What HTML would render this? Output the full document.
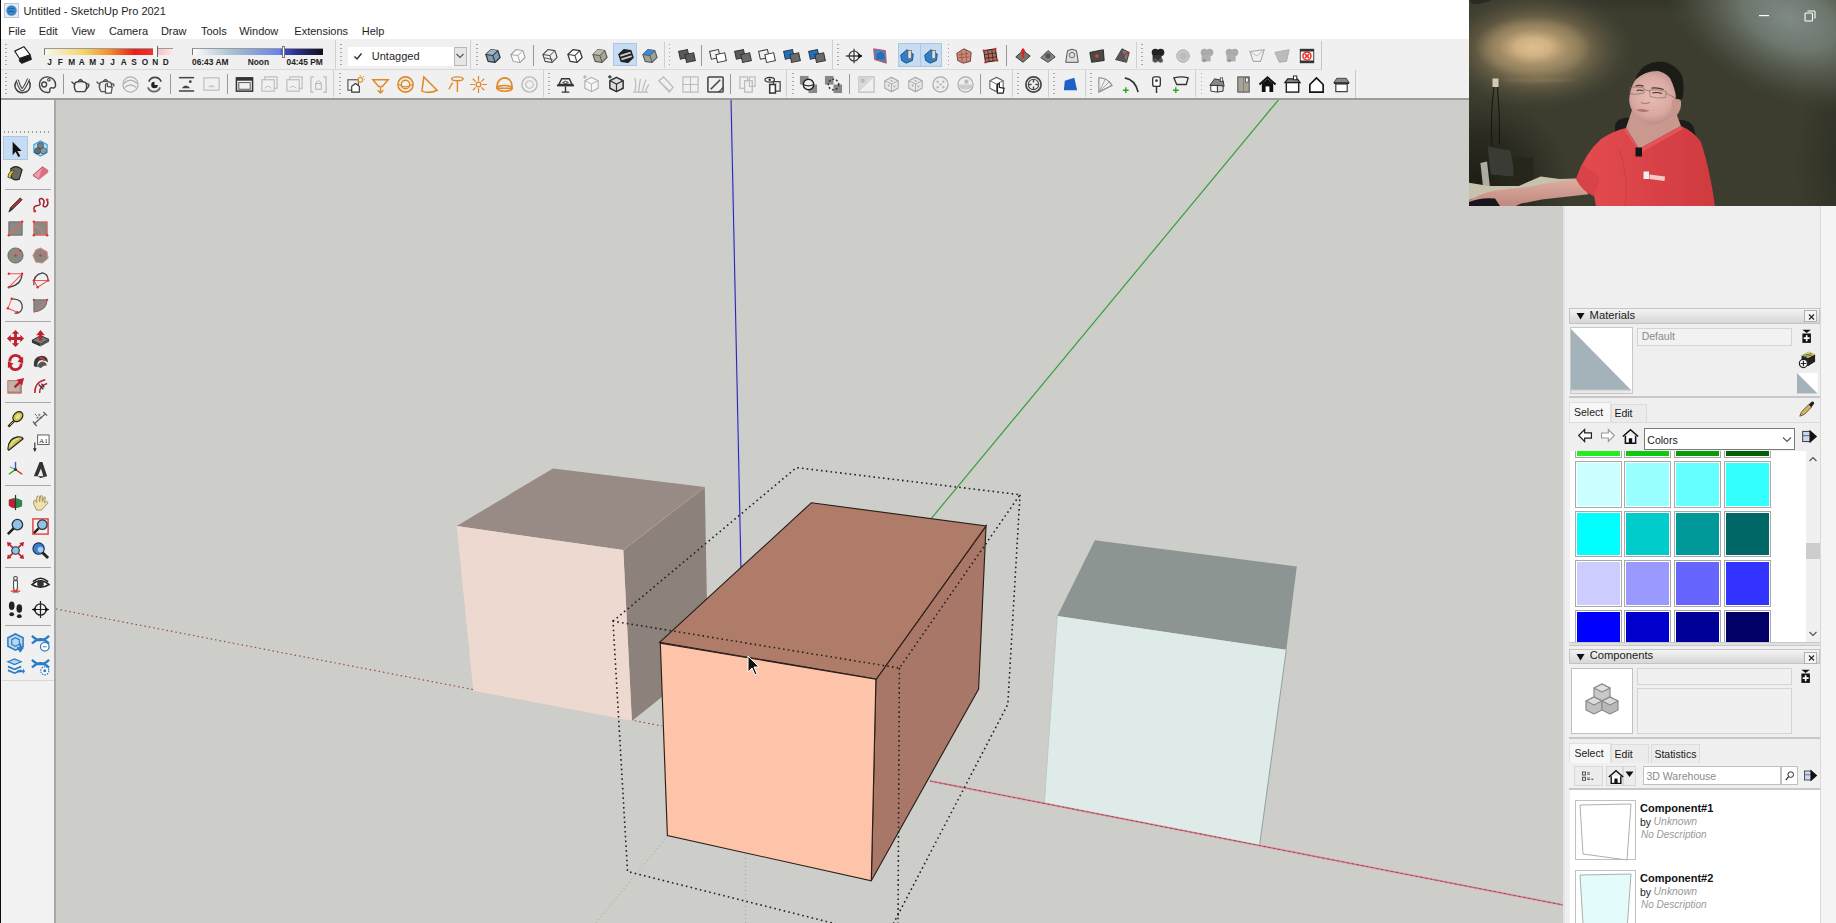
<!DOCTYPE html>
<html><head><meta charset="utf-8">
<style>
*{margin:0;padding:0;box-sizing:border-box}
html,body{width:1836px;height:923px;overflow:hidden;background:#f0f0f0;font-family:"Liberation Sans",sans-serif;color:#000;position:relative}
.a{position:absolute}
.t{position:absolute;white-space:nowrap;line-height:1}
svg{overflow:visible}
</style></head><body>
<div class="a" style="left:0px;top:0px;width:1836px;height:39px;background:#fff;"></div>
<svg class="a" style="left:4px;top:3px" width="15" height="15" viewBox="0 0 15 15"><rect x="0.5" y="0.5" width="14" height="14" fill="#e8eef5" stroke="#b8c8d8"/><circle cx="7.5" cy="7.5" r="5.2" fill="#3a86c8"/><path d="M4,6 Q7,4 10,6 M4,9 Q7,7 10,9" stroke="#1d5f9a" stroke-width="1" fill="none"/></svg>
<div class="t" style="left:23.4px;top:5.89px;font-size:11px;color:#1e1e1e;font-weight:normal;">Untitled - SketchUp Pro 2021</div>
<div class="t" style="left:8.2px;top:26.09px;font-size:11px;color:#1e1e1e;font-weight:normal;">File</div>
<div class="t" style="left:38.7px;top:26.09px;font-size:11px;color:#1e1e1e;font-weight:normal;">Edit</div>
<div class="t" style="left:71.4px;top:26.09px;font-size:11px;color:#1e1e1e;font-weight:normal;">View</div>
<div class="t" style="left:108.9px;top:26.09px;font-size:11px;color:#1e1e1e;font-weight:normal;">Camera</div>
<div class="t" style="left:160.9px;top:26.09px;font-size:11px;color:#1e1e1e;font-weight:normal;">Draw</div>
<div class="t" style="left:201px;top:26.09px;font-size:11px;color:#1e1e1e;font-weight:normal;">Tools</div>
<div class="t" style="left:239.2px;top:26.09px;font-size:11px;color:#1e1e1e;font-weight:normal;">Window</div>
<div class="t" style="left:294.3px;top:26.09px;font-size:11px;color:#1e1e1e;font-weight:normal;">Extensions</div>
<div class="t" style="left:361.7px;top:26.09px;font-size:11px;color:#1e1e1e;font-weight:normal;">Help</div>
<div class="a" style="left:0px;top:39px;width:1836px;height:59px;background:#f0f0f0;"></div>
<div class="a" style="left:0px;top:69px;width:1321.5px;height:1px;background:#dadada;"></div>
<div class="a" style="left:1321px;top:40.5px;width:1.2px;height:29px;background:#c8c8c8;"></div>
<div class="a" style="left:1354.8px;top:70px;width:1.4px;height:28px;background:#c8c8c8;"></div>
<div class="a" style="left:0px;top:98px;width:1836px;height:1.8px;background:#9c9c9c;"></div>
<div class="a" style="left:334.5px;top:40px;width:1px;height:29px;background:#d0d0d0;"></div>
<div class="a" style="left:470px;top:40px;width:1px;height:29px;background:#d0d0d0;"></div>
<div class="a" style="left:832px;top:40px;width:1px;height:29px;background:#d0d0d0;"></div>
<div class="a" style="left:786.3px;top:70px;width:1px;height:27px;background:#d0d0d0;"></div>
<div class="a" style="left:5px;top:44px;width:1.5px;height:24px;background:repeating-linear-gradient(to bottom,#a4a4a4 0 1.5px,transparent 1.5px 4px)"></div>
<svg class="a" style="left:14.3px;top:46.0px" width="19.0" height="19.0" viewBox="0 0 20 20"><polygon points="10.4,0.7 0.8,5.4 5.8,13.2 17.1,9.3" fill="#fff" stroke="#222" stroke-width="1.2" stroke-linejoin="round"/><polygon points="5.8,13.2 17.1,9.3 18.5,14.2 8.2,18.4 5.5,16" fill="#1a1a1a" stroke="#222" stroke-width=".8"/></svg>
<div class="a" style="left:43.5px;top:48px;width:129.5px;height:7px;background:linear-gradient(to right,#fbf7ea 0%,#f5d46a 30%,#f09030 50%,#e8201a 70%,#f03030 84%,#f7d0d0 84.5%,#f5c0c0 88%,#fbeaea 100%);border-left:1px solid #777;border-top:1px solid #999"></div>
<div class="a" style="left:153px;top:46px;width:4.5px;height:11px;background:#f6f6f6;border-right:1px solid #666"></div>
<div class="t" style="left:47.2px;top:57.97px;font-size:8.3px;color:#222;font-weight:bold;">J</div>
<div class="t" style="left:57.7px;top:57.97px;font-size:8.3px;color:#222;font-weight:bold;">F</div>
<div class="t" style="left:68.2px;top:57.97px;font-size:8.3px;color:#222;font-weight:bold;">M</div>
<div class="t" style="left:78.7px;top:57.97px;font-size:8.3px;color:#222;font-weight:bold;">A</div>
<div class="t" style="left:89.2px;top:57.97px;font-size:8.3px;color:#222;font-weight:bold;">M</div>
<div class="t" style="left:99.7px;top:57.97px;font-size:8.3px;color:#222;font-weight:bold;">J</div>
<div class="t" style="left:110.2px;top:57.97px;font-size:8.3px;color:#222;font-weight:bold;">J</div>
<div class="t" style="left:120.7px;top:57.97px;font-size:8.3px;color:#222;font-weight:bold;">A</div>
<div class="t" style="left:131.2px;top:57.97px;font-size:8.3px;color:#222;font-weight:bold;">S</div>
<div class="t" style="left:141.7px;top:57.97px;font-size:8.3px;color:#222;font-weight:bold;">O</div>
<div class="t" style="left:152.2px;top:57.97px;font-size:8.3px;color:#222;font-weight:bold;">N</div>
<div class="t" style="left:162.7px;top:57.97px;font-size:8.3px;color:#222;font-weight:bold;">D</div>
<div class="a" style="left:192px;top:48px;width:131px;height:7px;background:linear-gradient(to right,#fbfbfb 0%,#a8c0d0 30%,#6a80e8 67%,#5060d8 68%,#4050c0 70%,#2a2f88 80%,#10101a 100%);border-left:1px solid #777;border-top:1px solid #999"></div>
<div class="a" style="left:281.5px;top:46px;width:3px;height:12px;background:#fff;border:1px solid #777"></div>
<div class="t" style="left:192px;top:58.19px;font-size:8.4px;color:#222;font-weight:bold;">06:43 AM</div>
<div class="t" style="left:247.7px;top:58.19px;font-size:8.4px;color:#222;font-weight:bold;">Noon</div>
<div class="t" style="left:286.5px;top:58.19px;font-size:8.4px;color:#222;font-weight:bold;">04:45 PM</div>
<div class="a" style="left:340px;top:44px;width:1.5px;height:24px;background:repeating-linear-gradient(to bottom,#a4a4a4 0 1.5px,transparent 1.5px 4px)"></div>
<div class="a" style="left:348px;top:46.5px;width:118.5px;height:19.5px;background:#fff;"></div>
<div class="a" style="left:453.5px;top:46.5px;width:13px;height:19.5px;background:#e6e6e6;border:1px solid #b8b8b8"></div>
<svg class="a" style="left:455px;top:52px" width="10" height="8" viewBox="0 0 10 8"><path d="M1.5,2 L5,5.5 L8.5,2" fill="none" stroke="#555" stroke-width="1.1"/></svg>
<svg class="a" style="left:353px;top:52px" width="10" height="9" viewBox="0 0 10 9"><path d="M1.5,4.5 L4,7 L8.5,1.5" fill="none" stroke="#333" stroke-width="1.5"/></svg>
<div class="t" style="left:371.8px;top:50.69px;font-size:11px;color:#1e1e1e;font-weight:normal;">Untagged</div>
<div class="a" style="left:476px;top:44px;width:1.5px;height:24px;background:repeating-linear-gradient(to bottom,#a4a4a4 0 1.5px,transparent 1.5px 4px)"></div>
<svg class="a" style="left:484.0px;top:46.5px" width="18.0" height="18.0" viewBox="0 0 20 20"><g transform="rotate(-18 10 10)"><polygon points="3,6 10,2.5 17,6 17,14 10,17.5 3,14" fill="#7f9db3" stroke="#333" stroke-width="1.4" stroke-linejoin="round"/><polygon points="3,6 10,2.5 17,6 10,9.5" fill="#9bb6c8"/><polyline points="3,6 10,9.5 17,6 M10,9.5" fill="none" stroke="#333" stroke-width="1.1199999999999999"/><line x1="10" y1="9.5" x2="10" y2="17.5" stroke="#333" stroke-width="1.1199999999999999"/></g></svg>
<svg class="a" style="left:509.0px;top:46.5px" width="18.0" height="18.0" viewBox="0 0 20 20"><g transform="rotate(-18 10 10)"><polygon points="3,6 10,2.5 17,6 17,14 10,17.5 3,14" fill="#fafafa" stroke="#9a9a9a" stroke-width="1.1" stroke-linejoin="round"/><polyline points="3,6 10,9.5 17,6 M10,9.5" fill="none" stroke="#9a9a9a" stroke-width="0.8800000000000001"/><line x1="10" y1="9.5" x2="10" y2="17.5" stroke="#9a9a9a" stroke-width="0.8800000000000001"/></g></svg>
<svg class="a" style="left:541.0px;top:46.5px" width="18.0" height="18.0" viewBox="0 0 20 20"><g transform="rotate(-18 10 10)"><polygon points="3,6 10,2.5 17,6 17,14 10,17.5 3,14" fill="none" stroke="#444" stroke-width="1.2" stroke-linejoin="round"/><polyline points="3,6 10,9.5 17,6 M10,9.5" fill="none" stroke="#444" stroke-width="0.96"/><line x1="10" y1="9.5" x2="10" y2="17.5" stroke="#444" stroke-width="0.96"/></g><line x1="4" y1="12" x2="13" y2="14" stroke="#444" stroke-width="1"/></svg>
<svg class="a" style="left:566.2px;top:46.5px" width="18.0" height="18.0" viewBox="0 0 20 20"><g transform="rotate(-18 10 10)"><polygon points="3,6 10,2.5 17,6 17,14 10,17.5 3,14" fill="#fff" stroke="#333" stroke-width="1.4" stroke-linejoin="round"/><polyline points="3,6 10,9.5 17,6 M10,9.5" fill="none" stroke="#333" stroke-width="1.1199999999999999"/><line x1="10" y1="9.5" x2="10" y2="17.5" stroke="#333" stroke-width="1.1199999999999999"/></g></svg>
<svg class="a" style="left:591.0px;top:46.5px" width="18.0" height="18.0" viewBox="0 0 20 20"><g transform="rotate(-18 10 10)"><polygon points="3,6 10,2.5 17,6 17,14 10,17.5 3,14" fill="#a9a794" stroke="#555" stroke-width="1.2" stroke-linejoin="round"/><polygon points="3,6 10,2.5 17,6 10,9.5" fill="#bdbba6"/><polyline points="3,6 10,9.5 17,6 M10,9.5" fill="none" stroke="#555" stroke-width="0.96"/><line x1="10" y1="9.5" x2="10" y2="17.5" stroke="#555" stroke-width="0.96"/></g></svg>
<div class="a" style="left:532.8px;top:45px;width:1px;height:21px;background:#999;"></div>
<div class="a" style="left:612.9px;top:43.1px;width:24.5px;height:23.3px;background:#c5dcf2;border:1px solid #a9c8e8"></div>
<svg class="a" style="left:616.5px;top:46.5px" width="18.0" height="18.0" viewBox="0 0 20 20"><g transform="rotate(-18 10 10)"><polygon points="3,6 10,2.5 17,6 17,14 10,17.5 3,14" fill="#222" stroke="#222" stroke-width="1.4" stroke-linejoin="round"/><polyline points="3,6 10,9.5 17,6 M10,9.5" fill="none" stroke="#222" stroke-width="1.1199999999999999"/><line x1="10" y1="9.5" x2="10" y2="17.5" stroke="#222" stroke-width="1.1199999999999999"/></g><g transform="rotate(-18 10 10)"><rect x="4" y="7" width="12" height="2" fill="#ccc"/><rect x="4" y="11" width="12" height="2" fill="#ccc"/></g></svg>
<svg class="a" style="left:641.0px;top:46.5px" width="18.0" height="18.0" viewBox="0 0 20 20"><g transform="rotate(-18 10 10)"><polygon points="3,6 10,2.5 17,6 17,14 10,17.5 3,14" fill="#9fa19b" stroke="#555" stroke-width="1.2" stroke-linejoin="round"/><polygon points="3,6 10,2.5 17,6 10,9.5" fill="#2f8ede"/><polyline points="3,6 10,9.5 17,6 M10,9.5" fill="none" stroke="#555" stroke-width="0.96"/><line x1="10" y1="9.5" x2="10" y2="17.5" stroke="#555" stroke-width="0.96"/></g></svg>
<div class="a" style="left:663.5px;top:42px;width:1px;height:26px;background:#d0d0d0;"></div>
<div class="a" style="left:668.5px;top:44px;width:1.5px;height:24px;background:repeating-linear-gradient(to bottom,#a4a4a4 0 1.5px,transparent 1.5px 4px)"></div>
<svg class="a" style="left:677.5px;top:46.5px" width="18.0" height="18.0" viewBox="0 0 20 20"><g transform="rotate(-12 10 10)"><rect x="2" y="3" width="10" height="9" fill="#5a5a5a" stroke="#333" stroke-width="1.1"/><rect x="8" y="8" width="10" height="9" fill="#5a5a5a" stroke="#333" stroke-width="1.1"/></g></svg>
<div class="a" style="left:701px;top:45px;width:1px;height:21px;background:#999;"></div>
<svg class="a" style="left:709.0px;top:46.5px" width="18.0" height="18.0" viewBox="0 0 20 20"><g transform="rotate(-12 10 10)"><rect x="2" y="3" width="10" height="9" fill="none" stroke="#333" stroke-width="1.1"/><rect x="8" y="8" width="10" height="9" fill="#fff" stroke="#333" stroke-width="1.1"/></g></svg>
<svg class="a" style="left:734.0px;top:46.5px" width="18.0" height="18.0" viewBox="0 0 20 20"><g transform="rotate(-12 10 10)"><rect x="2" y="3" width="10" height="9" fill="#5a5a5a" stroke="#333" stroke-width="1.1"/><rect x="8" y="8" width="10" height="9" fill="#6a6a6a" stroke="#333" stroke-width="1.1"/></g></svg>
<svg class="a" style="left:758.0px;top:46.5px" width="18.0" height="18.0" viewBox="0 0 20 20"><g transform="rotate(-12 10 10)"><rect x="2" y="3" width="10" height="9" fill="none" stroke="#333" stroke-width="1.1"/><rect x="8" y="8" width="10" height="9" fill="#fff" stroke="#333" stroke-width="1.1"/></g></svg>
<svg class="a" style="left:783.0px;top:46.5px" width="18.0" height="18.0" viewBox="0 0 20 20"><g transform="rotate(-12 10 10)"><rect x="2" y="3" width="10" height="9" fill="#1f6fc0" stroke="#333" stroke-width="1.1"/><rect x="8" y="8" width="10" height="9" fill="#6a6a6a" stroke="#333" stroke-width="1.1"/></g></svg>
<svg class="a" style="left:808.0px;top:46.5px" width="18.0" height="18.0" viewBox="0 0 20 20"><g transform="rotate(-12 10 10)"><rect x="2" y="3" width="10" height="9" fill="#1f6fc0" stroke="#333" stroke-width="1.1"/><rect x="8" y="8" width="10" height="9" fill="#6a6a6a" stroke="#333" stroke-width="1.1"/></g></svg>
<div class="a" style="left:837px;top:44px;width:1.5px;height:24px;background:repeating-linear-gradient(to bottom,#a4a4a4 0 1.5px,transparent 1.5px 4px)"></div>
<svg class="a" style="left:845.0px;top:46.5px" width="18.0" height="18.0" viewBox="0 0 20 20"><circle cx="10" cy="10" r="5.5" fill="none" stroke="#333" stroke-width="1.2"/><line x1="1" y1="10" x2="19" y2="10" stroke="#222" stroke-width="1.4"/><line x1="10" y1="2" x2="10" y2="18" stroke="#222" stroke-width="1.2"/><polygon points="19,10 15,7 15,13" fill="#111"/></svg>
<svg class="a" style="left:871.0px;top:46.5px" width="18.0" height="18.0" viewBox="0 0 20 20"><polygon points="3,2 16,4 17,18 4,14" fill="#3f88cc" stroke="#d44" stroke-width="1"/><polygon points="6,8 11,5 15,8 15,14 6,14" fill="#2a6fb0"/></svg>
<div class="a" style="left:898px;top:43px;width:44px;height:23.5px;background:#c5dcf2;border:1px solid #a9c8e8"></div>
<div class="a" style="left:920px;top:43px;width:1px;height:23.5px;background:#a9c8e8;"></div>
<svg class="a" style="left:897.5px;top:46.5px" width="18.0" height="18.0" viewBox="0 0 20 20"><polygon points="3,9 10,3 17,8 16,15 9,18 4,15" fill="#2f7fc8" stroke="#1a4f80" stroke-width="1"/><rect x="11" y="4" width="4" height="9" fill="#ddd" stroke="#555" stroke-width=".7"/></svg>
<svg class="a" style="left:922.0px;top:46.5px" width="18.0" height="18.0" viewBox="0 0 20 20"><polygon points="3,9 10,3 17,8 16,15 9,18 4,15" fill="#2f7fc8" stroke="#1a4f80" stroke-width="1"/><rect x="11" y="4" width="4" height="9" fill="#ddd" stroke="#555" stroke-width=".7"/></svg>
<div class="a" style="left:947.5px;top:44px;width:1.5px;height:24px;background:repeating-linear-gradient(to bottom,#a4a4a4 0 1.5px,transparent 1.5px 4px)"></div>
<svg class="a" style="left:954.6px;top:46.5px" width="18.0" height="18.0" viewBox="0 0 20 20"><polygon points="2,7 10,2 18,6 17,16 9,18 3,15" fill="#c98a78" stroke="#6a3a30" stroke-width="1"/><path d="M4,9 L15,7 M4,12 L16,11 M7,5 L8,17 M12,4 L13,17" stroke="#8a4a40" stroke-width=".7"/></svg>
<svg class="a" style="left:981.0px;top:46.5px" width="18.0" height="18.0" viewBox="0 0 20 20"><polygon points="3,4 16,2 18,15 5,17" fill="#b86a5a" stroke="#222" stroke-width="1.1"/><path d="M4,8.5 L17,6.5 M4.5,12.5 L17.5,11 M7.5,3.5 L9,16.5 M12,3 L13.5,16" stroke="#222" stroke-width=".8"/><circle cx="3" cy="4" r="1.3" fill="#e22"/><circle cx="16" cy="2" r="1.3" fill="#e22"/><circle cx="18" cy="15" r="1.3" fill="#e22"/><circle cx="5" cy="17" r="1.3" fill="#e22"/></svg>
<div class="a" style="left:1005.6px;top:45px;width:1px;height:21px;background:#999;"></div>
<svg class="a" style="left:1013.6px;top:46.5px" width="18.0" height="18.0" viewBox="0 0 20 20"><polygon points="2,11 10,4 18,10 10,17" fill="#7a746a" stroke="#333" stroke-width="1"/><path d="M10,2 L10,12" stroke="#d22" stroke-width="2.4"/><polygon points="10,1 7,5 13,5" fill="#d22"/></svg>
<svg class="a" style="left:1038.5px;top:46.5px" width="18.0" height="18.0" viewBox="0 0 20 20"><polygon points="2,12 10,4 18,11 10,17" fill="#888" stroke="#333" stroke-width="1"/><circle cx="10" cy="10" r="3" fill="#555"/></svg>
<svg class="a" style="left:1062.7px;top:46.5px" width="18.0" height="18.0" viewBox="0 0 20 20"><path d="M5,4 Q10,1 15,4 L17,17 L3,17 Z" fill="#ddd" stroke="#555" stroke-width="1.1"/><circle cx="10" cy="9" r="3" fill="none" stroke="#666"/></svg>
<svg class="a" style="left:1088.0px;top:46.5px" width="18.0" height="18.0" viewBox="0 0 20 20"><polygon points="2,6 17,3 18,15 4,17" fill="#4a4a44" stroke="#222" stroke-width="1"/><circle cx="10" cy="10" r="2" fill="#d44"/></svg>
<svg class="a" style="left:1113.0px;top:46.5px" width="18.0" height="18.0" viewBox="0 0 20 20"><polygon points="10,2 18,6 15,17 3,14" fill="#777" stroke="#333" stroke-width="1"/><path d="M3,14 L18,6" stroke="#d22" stroke-width="1.4"/><polygon points="10,2 3,14 15,17" fill="#555"/></svg>
<div class="a" style="left:1136px;top:42px;width:1px;height:26px;background:#d0d0d0;"></div>
<div class="a" style="left:1141px;top:44px;width:1.5px;height:24px;background:repeating-linear-gradient(to bottom,#a4a4a4 0 1.5px,transparent 1.5px 4px)"></div>
<svg class="a" style="left:1148.7px;top:46.5px" width="18.0" height="18.0" viewBox="0 0 20 20"><circle cx="7" cy="6" r="4" fill="#222"/><circle cx="13" cy="6" r="4" fill="#222"/><rect x="4" y="9" width="10" height="7" fill="#333"/><circle cx="7" cy="15" r="2.5" fill="#555"/><circle cx="13" cy="15" r="2.5" fill="#555"/></svg>
<svg class="a" style="left:1173.5px;top:46.5px" width="18.0" height="18.0" viewBox="0 0 20 20"><circle cx="10" cy="10" r="7" fill="#c8c8c8" stroke="#aaa"/><circle cx="10" cy="10" r="4" fill="#bbb"/></svg>
<svg class="a" style="left:1198.4px;top:46.5px" width="18.0" height="18.0" viewBox="0 0 20 20"><circle cx="7" cy="6" r="4" fill="#aaa"/><circle cx="13" cy="6" r="4" fill="#aaa"/><rect x="4" y="9" width="10" height="7" fill="#b0b0b0"/><circle cx="7" cy="15" r="2" fill="#999"/></svg>
<svg class="a" style="left:1223.2px;top:46.5px" width="18.0" height="18.0" viewBox="0 0 20 20"><circle cx="7" cy="6" r="4" fill="#aaa"/><circle cx="13" cy="6" r="4" fill="#aaa"/><rect x="4" y="9" width="10" height="7" fill="#b0b0b0"/><circle cx="7" cy="15" r="2" fill="#999"/></svg>
<svg class="a" style="left:1248.0px;top:46.5px" width="18.0" height="18.0" viewBox="0 0 20 20"><polygon points="2,5 18,3 14,16 6,16" fill="none" stroke="#aaa" stroke-width="1.2"/><path d="M2,5 L10,10 L18,3" stroke="#bbb" fill="none"/></svg>
<svg class="a" style="left:1273.0px;top:46.5px" width="18.0" height="18.0" viewBox="0 0 20 20"><polygon points="2,6 18,3 15,16 7,17" fill="#bbb" stroke="#aaa" stroke-width="1"/></svg>
<svg class="a" style="left:1297.7px;top:46.5px" width="18.0" height="18.0" viewBox="0 0 20 20"><rect x="2" y="2" width="16" height="16" fill="#333"/><rect x="3" y="5" width="14" height="10" fill="#f2f2f2"/><circle cx="10" cy="10" r="4.5" fill="none" stroke="#e22" stroke-width="1.5"/><path d="M7.5,7.5 L12.5,12.5 M12.5,7.5 L7.5,12.5" stroke="#e22" stroke-width="1.5"/></svg>
<div class="a" style="left:5px;top:73px;width:1.5px;height:22px;background:repeating-linear-gradient(to bottom,#a4a4a4 0 1.5px,transparent 1.5px 4px)"></div>
<svg class="a" style="left:13.2px;top:74.5px" width="19.0" height="19.0" viewBox="0 0 20 20"><path d="M5,5 Q1,9 2.5,13.5 Q5,19 11,18.5 Q17,18 18,12 Q18.5,8 16,5" fill="none" stroke="#444" stroke-width="1.6"/><path d="M4.5,5.5 Q8,17 10.5,15 Q13,12 16.5,4" fill="none" stroke="#444" stroke-width="3.4"/><path d="M4.5,5.5 Q8,17 10.5,15 Q13,12 16.5,4" fill="none" stroke="#f0f0f0" stroke-width="1.2"/></svg>
<svg class="a" style="left:38.2px;top:74.5px" width="19.0" height="19.0" viewBox="0 0 20 20"><path d="M10,2 C15,2 18.5,6 18.5,10.5 C18.5,13 17,14 15,13.5 C13,13 12,14.5 12.5,16.5 C12.5,18 11,18.5 9.5,18.5 C5,18.5 1.5,15 1.5,10 C1.5,5.5 5,2 10,2 Z" fill="none" stroke="#444" stroke-width="1.5"/><circle cx="6.5" cy="10" r="2.6" fill="none" stroke="#444" stroke-width="1.4"/><circle cx="11.5" cy="5" r="1.4" fill="none" stroke="#444" stroke-width="1.1"/></svg>
<div class="a" style="left:62.5px;top:74px;width:1px;height:20px;background:#999;"></div>
<svg class="a" style="left:71.0px;top:74.5px" width="19.0" height="19.0" viewBox="0 0 20 20"><path d="M4.5,8 Q10,5.5 15.5,8 Q18,13 14.5,17.5 L5.5,17.5 Q2,13 4.5,8 Z" fill="none" stroke="#444" stroke-width="1.5"/><path d="M4.5,10 Q2,9 0.5,7 M16,9 Q20,9 18.5,12 Q17.5,14 16,15" fill="none" stroke="#444" stroke-width="1.4"/><path d="M7.5,6 Q10,3 12.5,6" fill="#444" stroke="#444" stroke-width="1"/></svg>
<svg class="a" style="left:95.5px;top:74.5px" width="19.0" height="19.0" viewBox="0 0 20 20"><path d="M4.5,8 Q10,5.5 15.5,8 Q18,13 14.5,17.5 L5.5,17.5 Q2,13 4.5,8 Z" fill="none" stroke="#555" stroke-width="1.4"/><path d="M4.5,10 Q2,9 0.5,7 M16,9 Q20,9 18.5,12" fill="none" stroke="#555" stroke-width="1.4"/><path d="M7.5,6 Q10,3 12.5,6" fill="#555" stroke="#555"/><path d="M10,10 L10,19 L16,19 L17,13 L12,12 L12,9 Z" fill="#fff" stroke="#555" stroke-width="1.3"/></svg>
<svg class="a" style="left:120.5px;top:74.5px" width="19.0" height="19.0" viewBox="0 0 20 20"><circle cx="10" cy="10" r="8" fill="none" stroke="#b0b0b0" stroke-width="1.3"/><path d="M3,9 Q10,2 17,9 M4,13 Q10,8 16,13" fill="none" stroke="#aaa" stroke-width="1.3"/></svg>
<svg class="a" style="left:145.1px;top:74.5px" width="19.0" height="19.0" viewBox="0 0 20 20"><path d="M4,7 A7,7 0 0 1 17,7" fill="none" stroke="#444" stroke-width="1.8"/><path d="M16,13 A7,7 0 0 1 3,13" fill="none" stroke="#666" stroke-width="1.8"/><path d="M10,7 A3.5,3.5 0 1 0 13.5,10.5 L10,10.5 Z" fill="#222"/></svg>
<div class="a" style="left:170px;top:74px;width:1px;height:20px;background:#999;"></div>
<svg class="a" style="left:177.2px;top:74.5px" width="19.0" height="19.0" viewBox="0 0 20 20"><rect x="2" y="2" width="16" height="1.6" fill="#444"/><rect x="2" y="16" width="16" height="1.6" fill="#444"/><path d="M5,14 Q9,8 14,14 Z" fill="#444"/><circle cx="14" cy="7" r="1.5" fill="#444"/></svg>
<svg class="a" style="left:202.3px;top:74.5px" width="19.0" height="19.0" viewBox="0 0 20 20"><rect x="2" y="3" width="16" height="13" fill="none" stroke="#bbb" stroke-width="1.2"/><path d="M6,13 Q10,8 14,13" fill="#ccc"/></svg>
<div class="a" style="left:226.8px;top:74px;width:1px;height:20px;background:#999;"></div>
<svg class="a" style="left:234.9px;top:74.5px" width="19.0" height="19.0" viewBox="0 0 20 20"><rect x="1.5" y="3" width="17" height="14" fill="none" stroke="#333" stroke-width="1.6"/><rect x="1.5" y="3" width="17" height="3" fill="#333"/><rect x="4" y="8" width="12" height="7" fill="none" stroke="#555" stroke-width="1"/></svg>
<svg class="a" style="left:259.9px;top:74.5px" width="19.0" height="19.0" viewBox="0 0 20 20"><rect x="5" y="2" width="13" height="12" fill="none" stroke="#bbb" stroke-width="1.2"/><rect x="2" y="5" width="13" height="12" fill="#f0f0f0" stroke="#bbb" stroke-width="1.2"/><path d="M5,14 Q8,10 12,14" fill="none" stroke="#bbb"/></svg>
<svg class="a" style="left:285.0px;top:74.5px" width="19.0" height="19.0" viewBox="0 0 20 20"><rect x="5" y="2" width="13" height="12" fill="none" stroke="#bbb" stroke-width="1.2"/><rect x="2" y="5" width="13" height="12" fill="#f0f0f0" stroke="#bbb" stroke-width="1.2"/><path d="M5,14 Q8,10 12,14" fill="none" stroke="#bbb"/></svg>
<svg class="a" style="left:309.3px;top:74.5px" width="19.0" height="19.0" viewBox="0 0 20 20"><path d="M2,2 L2,18 L5,18 M15,18 L18,18 L18,2 L15,2 M5,2 L2,2" fill="none" stroke="#bbb" stroke-width="1.3"/><rect x="7" y="9" width="6" height="6" fill="none" stroke="#bbb" stroke-width="1.2"/><path d="M8,9 L8,7 Q10,5 12,7 L12,9" fill="none" stroke="#bbb"/></svg>
<div class="a" style="left:333.3px;top:70px;width:1px;height:27px;background:#d0d0d0;"></div>
<div class="a" style="left:339px;top:73px;width:1.5px;height:22px;background:repeating-linear-gradient(to bottom,#a4a4a4 0 1.5px,transparent 1.5px 4px)"></div>
<svg class="a" style="left:345.9px;top:74.5px" width="19.0" height="19.0" viewBox="0 0 20 20"><rect x="2" y="5" width="11" height="11" fill="none" stroke="#555" stroke-width="1.2"/><path d="M6,18 L6,12 L10,9 L14,12 L14,18 Z" fill="#fff" stroke="#333" stroke-width="1.2"/><circle cx="15" cy="5" r="2.5" fill="none" stroke="#e8912e" stroke-width="1.3"/><path d="M15,0 L15,1.5 M19,5 L20,5 M18,2 L19,1" stroke="#e8912e"/></svg>
<svg class="a" style="left:371.0px;top:74.5px" width="19.0" height="19.0" viewBox="0 0 20 20"><path d="M2,5 L18,5 L12,12 L8,12 Z" fill="none" stroke="#e0892a" stroke-width="1.6"/><path d="M10,12 L10,18 M7,16 L10,19 L13,16" fill="none" stroke="#e0892a" stroke-width="1.4"/></svg>
<svg class="a" style="left:396.0px;top:74.5px" width="19.0" height="19.0" viewBox="0 0 20 20"><circle cx="10" cy="10" r="8" fill="none" stroke="#e0892a" stroke-width="1.7"/><circle cx="10" cy="10" r="4.5" fill="none" stroke="#e0892a" stroke-width="1.5"/><path d="M3,10 Q10,15 17,10" fill="none" stroke="#e0892a" stroke-width="1.2"/></svg>
<svg class="a" style="left:420.3px;top:74.5px" width="19.0" height="19.0" viewBox="0 0 20 20"><path d="M4,2 L2,17 Q10,20 18,16 Z" fill="none" stroke="#e0892a" stroke-width="1.6"/></svg>
<svg class="a" style="left:445.5px;top:74.5px" width="19.0" height="19.0" viewBox="0 0 20 20"><ellipse cx="12" cy="4" rx="6" ry="2" fill="none" stroke="#e0892a" stroke-width="1.5"/><path d="M12,6 L12,18 M7,8 L3,15" stroke="#e0892a" stroke-width="1.5"/></svg>
<svg class="a" style="left:469.3px;top:74.5px" width="19.0" height="19.0" viewBox="0 0 20 20"><circle cx="10" cy="10" r="2.5" fill="none" stroke="#e0892a" stroke-width="1.4"/><path d="M10,1 L10,6 M10,14 L10,19 M1,10 L6,10 M14,10 L19,10 M4,4 L7,7 M13,13 L16,16 M16,4 L13,7 M7,13 L4,16" stroke="#e0892a" stroke-width="1.3"/></svg>
<svg class="a" style="left:494.5px;top:74.5px" width="19.0" height="19.0" viewBox="0 0 20 20"><path d="M2,14 Q2,3 11,3 Q18,4 18,14 Z" fill="none" stroke="#e0892a" stroke-width="1.7"/><ellipse cx="10" cy="14" rx="8" ry="3" fill="none" stroke="#e0892a" stroke-width="1.6"/></svg>
<svg class="a" style="left:519.5px;top:74.5px" width="19.0" height="19.0" viewBox="0 0 20 20"><circle cx="10" cy="10" r="8" fill="none" stroke="#bbb" stroke-width="1.5"/><circle cx="10" cy="10" r="4" fill="none" stroke="#bbb" stroke-width="1.2"/></svg>
<div class="a" style="left:543.3px;top:70px;width:1px;height:27px;background:#d0d0d0;"></div>
<div class="a" style="left:548px;top:73px;width:1.5px;height:22px;background:repeating-linear-gradient(to bottom,#a4a4a4 0 1.5px,transparent 1.5px 4px)"></div>
<svg class="a" style="left:555.8px;top:74.5px" width="19.0" height="19.0" viewBox="0 0 20 20"><path d="M3,10 L6,4 L14,4 L17,10 Z" fill="none" stroke="#333" stroke-width="1.5"/><rect x="1" y="10" width="18" height="2" fill="#333"/><path d="M10,12 L10,18 M6,18 L14,18" stroke="#333" stroke-width="1.5"/><path d="M7,8 Q10,5 13,8 Q10,10 7,8" fill="none" stroke="#333"/></svg>
<svg class="a" style="left:582.1px;top:74.5px" width="19.0" height="19.0" viewBox="0 0 20 20"><g transform="rotate(0 10 10)"><polygon points="3,6 10,2.5 17,6 17,14 10,17.5 3,14" fill="#f6f6f6" stroke="#aaa" stroke-width="1.1" stroke-linejoin="round"/><polyline points="3,6 10,9.5 17,6 M10,9.5" fill="none" stroke="#aaa" stroke-width="0.8800000000000001"/><line x1="10" y1="9.5" x2="10" y2="17.5" stroke="#aaa" stroke-width="0.8800000000000001"/></g><path d="M3,0 L3,4 M1,2 L5,2" stroke="#aaa" stroke-width="1"/></svg>
<svg class="a" style="left:607.2px;top:74.5px" width="19.0" height="19.0" viewBox="0 0 20 20"><g transform="rotate(0 10 10)"><polygon points="3,6 10,2.5 17,6 17,14 10,17.5 3,14" fill="#ddd" stroke="#333" stroke-width="1.6" stroke-linejoin="round"/><polyline points="3,6 10,9.5 17,6 M10,9.5" fill="none" stroke="#333" stroke-width="1.2800000000000002"/><line x1="10" y1="9.5" x2="10" y2="17.5" stroke="#333" stroke-width="1.2800000000000002"/></g><path d="M3,0 L3,4 M1,2 L5,2" stroke="#333" stroke-width="1.2"/></svg>
<svg class="a" style="left:631.0px;top:74.5px" width="19.0" height="19.0" viewBox="0 0 20 20"><path d="M4,18 Q6,10 4,3 M8,18 Q9,8 10,4 M12,18 Q13,10 16,5 M15,18 Q17,12 19,10 M2,18 L18,18" fill="none" stroke="#bbb" stroke-width="1.3"/></svg>
<svg class="a" style="left:656.0px;top:74.5px" width="19.0" height="19.0" viewBox="0 0 20 20"><path d="M3,6 L8,2 L18,13 L14,18 Z" fill="none" stroke="#bbb" stroke-width="1.4"/><path d="M5,8 L15,17" stroke="#bbb"/></svg>
<svg class="a" style="left:681.1px;top:74.5px" width="19.0" height="19.0" viewBox="0 0 20 20"><rect x="2" y="2" width="16" height="16" fill="none" stroke="#bbb" stroke-width="1.3"/><path d="M10,2 L10,18 M2,10 L18,10" stroke="#bbb" stroke-width="1.2"/></svg>
<svg class="a" style="left:705.5px;top:74.5px" width="19.0" height="19.0" viewBox="0 0 20 20"><rect x="2" y="2" width="16" height="16" rx="1" fill="none" stroke="#444" stroke-width="1.6"/><path d="M5,15 L15,5" stroke="#444" stroke-width="1.6"/><path d="M13,18 Q16,16 18,13" fill="none" stroke="#444" stroke-width="1.4"/></svg>
<div class="a" style="left:729.5px;top:74px;width:1px;height:20px;background:#999;"></div>
<svg class="a" style="left:737.5px;top:74.5px" width="19.0" height="19.0" viewBox="0 0 20 20"><rect x="2" y="2" width="8" height="12" fill="none" stroke="#bbb" stroke-width="1.3"/><rect x="7" y="6" width="8" height="12" fill="#f0f0f0" stroke="#bbb" stroke-width="1.3"/><rect x="12" y="2" width="6" height="10" fill="none" stroke="#bbb" stroke-width="1.2"/></svg>
<svg class="a" style="left:763.8px;top:74.5px" width="19.0" height="19.0" viewBox="0 0 20 20"><ellipse cx="6" cy="5" rx="5" ry="2.5" fill="none" stroke="#333" stroke-width="1.3"/><circle cx="6" cy="5" r="1.3" fill="#333"/><rect x="10" y="7" width="7" height="10" fill="none" stroke="#444" stroke-width="1.3"/><rect x="6" y="10" width="6" height="9" fill="#fff" stroke="#333" stroke-width="1.6"/></svg>
<div class="a" style="left:792px;top:73px;width:1.5px;height:22px;background:repeating-linear-gradient(to bottom,#a4a4a4 0 1.5px,transparent 1.5px 4px)"></div>
<svg class="a" style="left:798.9px;top:74.5px" width="19.0" height="19.0" viewBox="0 0 20 20"><rect x="1" y="1" width="9" height="9" fill="#888"/><rect x="10" y="10" width="9" height="9" fill="#888"/><circle cx="10" cy="10" r="5.5" fill="#f0f0f0" stroke="#222" stroke-width="1.5"/><path d="M4.5,10 Q10,13 15.5,10" fill="none" stroke="#222" stroke-width="1.2"/></svg>
<svg class="a" style="left:824.0px;top:74.5px" width="19.0" height="19.0" viewBox="0 0 20 20"><rect x="1" y="1" width="9" height="9" fill="#888"/><rect x="10" y="10" width="9" height="9" fill="#888"/><circle cx="10" cy="10" r="5.5" fill="none" stroke="#333" stroke-width="1.6" stroke-dasharray="2 2"/></svg>
<div class="a" style="left:848.5px;top:74px;width:1px;height:20px;background:#999;"></div>
<svg class="a" style="left:856.5px;top:74.5px" width="19.0" height="19.0" viewBox="0 0 20 20"><rect x="2" y="2" width="16" height="16" fill="none" stroke="#bbb" stroke-width="1.3"/><path d="M2,18 L18,2 L2,2 Z" fill="#d8d8d8"/><rect x="4" y="4" width="4" height="4" fill="#bbb"/></svg>
<svg class="a" style="left:881.5px;top:74.5px" width="19.0" height="19.0" viewBox="0 0 20 20"><g transform="rotate(0 10 10)"><polygon points="3,6 10,2.5 17,6 17,14 10,17.5 3,14" fill="#e8e8e8" stroke="#aaa" stroke-width="1.2" stroke-linejoin="round"/><polyline points="3,6 10,9.5 17,6 M10,9.5" fill="none" stroke="#aaa" stroke-width="0.96"/><line x1="10" y1="9.5" x2="10" y2="17.5" stroke="#aaa" stroke-width="0.96"/></g><circle cx="7" cy="11" r="1" fill="#aaa"/><circle cx="13" cy="12" r="1" fill="#aaa"/><circle cx="10" cy="6" r="1" fill="#aaa"/></svg>
<svg class="a" style="left:906.0px;top:74.5px" width="19.0" height="19.0" viewBox="0 0 20 20"><g transform="rotate(0 10 10)"><polygon points="3,6 10,2.5 17,6 17,14 10,17.5 3,14" fill="#e8e8e8" stroke="#aaa" stroke-width="1.2" stroke-linejoin="round"/><polyline points="3,6 10,9.5 17,6 M10,9.5" fill="none" stroke="#aaa" stroke-width="0.96"/><line x1="10" y1="9.5" x2="10" y2="17.5" stroke="#aaa" stroke-width="0.96"/></g><circle cx="7" cy="11" r="1" fill="#aaa"/><circle cx="13" cy="12" r="1" fill="#aaa"/><circle cx="10" cy="6" r="1" fill="#aaa"/></svg>
<svg class="a" style="left:930.9px;top:74.5px" width="19.0" height="19.0" viewBox="0 0 20 20"><circle cx="10" cy="10" r="8" fill="#eee" stroke="#aaa" stroke-width="1.3"/><circle cx="7" cy="7" r="1.3" fill="#bbb"/><circle cx="13" cy="7" r="1.3" fill="#bbb"/><circle cx="7" cy="13" r="1.3" fill="#bbb"/><circle cx="13" cy="13" r="1.3" fill="#bbb"/><circle cx="10" cy="10" r="1.3" fill="#bbb"/></svg>
<svg class="a" style="left:955.5px;top:74.5px" width="19.0" height="19.0" viewBox="0 0 20 20"><circle cx="10" cy="10" r="8" fill="#eee" stroke="#aaa" stroke-width="1.3"/><path d="M2,10 L18,10 L18,12 Q10,19 2,12 Z" fill="#ccc"/><rect x="9" y="5" width="4" height="4" fill="#bbb"/></svg>
<div class="a" style="left:980px;top:74px;width:1px;height:20px;background:#999;"></div>
<svg class="a" style="left:986.5px;top:74.5px" width="19.0" height="19.0" viewBox="0 0 20 20"><g transform="rotate(0 10 10)"><polygon points="3,6 10,2.5 17,6 17,14 10,17.5 3,14" fill="#fff" stroke="#666" stroke-width="1.2" stroke-linejoin="round"/><polyline points="3,6 10,9.5 17,6 M10,9.5" fill="none" stroke="#666" stroke-width="0.96"/><line x1="10" y1="9.5" x2="10" y2="17.5" stroke="#666" stroke-width="0.96"/></g><path d="M11,10 L11,19 L17,19 L18,14 L13,13 L13,9 Z" fill="#fff" stroke="#222" stroke-width="1.3"/></svg>
<div class="a" style="left:1011.8px;top:70px;width:1px;height:27px;background:#d0d0d0;"></div>
<div class="a" style="left:1017px;top:73px;width:1.5px;height:22px;background:repeating-linear-gradient(to bottom,#a4a4a4 0 1.5px,transparent 1.5px 4px)"></div>
<svg class="a" style="left:1024.0px;top:74.5px" width="19.0" height="19.0" viewBox="0 0 20 20"><circle cx="10" cy="10" r="8" fill="none" stroke="#444" stroke-width="1.8"/><circle cx="10" cy="10" r="5.5" fill="none" stroke="#444" stroke-width="1.1"/><path d="M10,4.5 L10,8 M4.5,10 L8,10 M12,10 L15.5,10 M10,12 L10,15.5" stroke="#444" stroke-width="1.5"/></svg>
<div class="a" style="left:1047.5px;top:70px;width:1px;height:27px;background:#d0d0d0;"></div>
<div class="a" style="left:1053px;top:73px;width:1.5px;height:22px;background:repeating-linear-gradient(to bottom,#a4a4a4 0 1.5px,transparent 1.5px 4px)"></div>
<svg class="a" style="left:1060.5px;top:74.5px" width="19.0" height="19.0" viewBox="0 0 20 20"><polygon points="4,6 14,3 17,16 3,16" fill="#1f5fc8"/></svg>
<div class="a" style="left:1084.7px;top:70px;width:1px;height:27px;background:#d0d0d0;"></div>
<div class="a" style="left:1090px;top:73px;width:1.5px;height:22px;background:repeating-linear-gradient(to bottom,#a4a4a4 0 1.5px,transparent 1.5px 4px)"></div>
<svg class="a" style="left:1095.5px;top:74.5px" width="19.0" height="19.0" viewBox="0 0 20 20"><path d="M3,18 L3,3 Q12,3 17,11 Z" fill="none" stroke="#888" stroke-width="1.1"/><path d="M3,18 L10,4 M3,18 L14,7 M3,18 L16,11" stroke="#999" stroke-width=".9"/></svg>
<svg class="a" style="left:1121.5px;top:74.5px" width="19.0" height="19.0" viewBox="0 0 20 20"><path d="M3,3 Q14,5 17,18" fill="none" stroke="#333" stroke-width="1.7"/><path d="M4,13 L4,19 M1,16 L7,16" stroke="#2a2" stroke-width="1.5"/></svg>
<svg class="a" style="left:1146.5px;top:74.5px" width="19.0" height="19.0" viewBox="0 0 20 20"><rect x="6" y="2" width="8" height="10" rx="2" fill="#fff" stroke="#333" stroke-width="1.4"/><circle cx="10" cy="6" r="1.4" fill="#333"/><path d="M10,12 L10,19" stroke="#333" stroke-width="1.5"/></svg>
<svg class="a" style="left:1171.5px;top:74.5px" width="19.0" height="19.0" viewBox="0 0 20 20"><path d="M2,3 Q10,1 17,3 L15,10 L5,10 Z" fill="none" stroke="#333" stroke-width="1.4"/><path d="M4,13 L4,19 M1,16 L7,16" stroke="#2a2" stroke-width="1.5"/></svg>
<div class="a" style="left:1195px;top:70px;width:1px;height:27px;background:#d0d0d0;"></div>
<div class="a" style="left:1200.5px;top:73px;width:1.5px;height:22px;background:repeating-linear-gradient(to bottom,#a4a4a4 0 1.5px,transparent 1.5px 4px)"></div>
<svg class="a" style="left:1207.2px;top:74.5px" width="19.0" height="19.0" viewBox="0 0 20 20"><polygon points="3,11 8,4 17,6 18,12 11,11" fill="#8a8a80" stroke="#333" stroke-width="1"/><polygon points="4,11 11,11 11,18 4,17" fill="#fff" stroke="#333" stroke-width="1"/><polygon points="11,11 17,11.5 17,17 11,18" fill="#ddd" stroke="#333" stroke-width="1"/><rect x="14" y="3" width="2.5" height="4" fill="#fff" stroke="#333" stroke-width=".8"/></svg>
<svg class="a" style="left:1233.5px;top:74.5px" width="19.0" height="19.0" viewBox="0 0 20 20"><rect x="4" y="2" width="12" height="16" fill="#a8a494" stroke="#555" stroke-width="1.1"/><path d="M10,2 L10,18" stroke="#777" stroke-width=".8"/><rect x="12" y="3" width="3" height="4.5" fill="#fff" stroke="#444" stroke-width=".8"/></svg>
<svg class="a" style="left:1257.8px;top:74.5px" width="19.0" height="19.0" viewBox="0 0 20 20"><path d="M1.5,10 L10,2.5 L18.5,10" fill="none" stroke="#111" stroke-width="2"/><path d="M4,9 L4,18 L16,18 L16,9 L10,4 Z" fill="#111"/><rect x="8" y="12" width="4" height="6" fill="#fff"/></svg>
<svg class="a" style="left:1282.5px;top:74.5px" width="19.0" height="19.0" viewBox="0 0 20 20"><path d="M2,8 L5,4 L15,4 L18,8 Z" fill="#8a8a7e" stroke="#222" stroke-width="1.3"/><rect x="3.5" y="8" width="13" height="10" fill="#fff" stroke="#222" stroke-width="1.5"/><rect x="11" y="1" width="3.5" height="4" fill="#fff" stroke="#222" stroke-width="1"/></svg>
<svg class="a" style="left:1307.1px;top:74.5px" width="19.0" height="19.0" viewBox="0 0 20 20"><path d="M3,18 L3,10 L10,3 L17,10 L17,18 Z" fill="#fff" stroke="#111" stroke-width="1.7"/></svg>
<svg class="a" style="left:1332.0px;top:74.5px" width="19.0" height="19.0" viewBox="0 0 20 20"><path d="M2,8 L5,3.5 L15,3.5 L18,8 Z" fill="#8a8a7e" stroke="#444" stroke-width="1"/><rect x="2" y="8" width="16" height="1.5" fill="#222"/><rect x="4" y="9.5" width="12" height="8" fill="#fff" stroke="#444" stroke-width="1.3"/></svg>
<div class="a" style="left:54px;top:99.8px;width:2px;height:825px;background:#a8a8a8;"></div>
<div class="a" style="left:56px;top:99.8px;width:1507px;height:825px;background:#cdceca;"></div>
<div class="a" style="left:1563px;top:99.8px;width:2px;height:825px;background:#e4e4e4;"></div>
<svg class="a" style="left:0;top:0" width="1836" height="923" viewBox="0 0 1836 923">
<defs><clipPath id="vpc"><rect x="56" y="99.8" width="1507" height="824"/></clipPath></defs>
<g clip-path="url(#vpc)">
 <line x1="731" y1="99" x2="741" y2="570" stroke="#c8c6e0" stroke-width="3"/>
 <line x1="731" y1="99" x2="741" y2="570" stroke="#2c2aa0" stroke-width="1.1"/>
 <line x1="1280" y1="98" x2="930" y2="520" stroke="#b8d8b8" stroke-width="3"/>
 <line x1="1280" y1="98" x2="930" y2="520" stroke="#4a8a4a" stroke-width="1.1"/>
 <line x1="930" y1="781" x2="1563" y2="905" stroke="#dcb0b8" stroke-width="2.6"/>
 <line x1="930" y1="781" x2="1563" y2="905" stroke="#c0606a" stroke-width="1"/>
 <line x1="930" y1="781" x2="1563" y2="905" stroke="#6a3040" stroke-width="1.1" stroke-dasharray="1.5 3.5" opacity=".6"/>
 <line x1="56" y1="609" x2="662" y2="726" stroke="#9a4a50" stroke-width="1.2" stroke-dasharray="1.5 3"/>
 <line x1="744" y1="743" x2="590" y2="930" stroke="#5a9a5a" stroke-width="1" stroke-dasharray="1 3" opacity=".6"/>
 <line x1="745.6" y1="690" x2="745.6" y2="923" stroke="#888" stroke-width="1" stroke-dasharray="1 3" opacity=".6"/>
 <polygon points="623.3,550 704.8,487 708,660 631.9,721" fill="#8c817b"/>
 <polygon points="553,468.5 704.8,487 623.3,550 456.7,526" fill="#988a84"/>
 <line x1="623.3" y1="550" x2="704.8" y2="487" stroke="#a89d97" stroke-width="1"/>
 <polygon points="456.7,526 623.3,550 631.9,721 473.3,690.7" fill="#eed9d1"/>
 <polygon points="1094.8,540.3 1296.8,566.4 1286.3,649.8 1057.3,615.9" fill="#8d9592"/>
 <polygon points="1057.3,615.9 1286.3,649.8 1259.7,844.5 1044.4,802.3" fill="#dfebe8"/>
 <line x1="1286.3" y1="649.8" x2="1259.7" y2="844.5" stroke="#8a9a98" stroke-width=".9"/>
 <line x1="1057.3" y1="615.9" x2="1044.4" y2="802.3" stroke="#b8c4c2" stroke-width=".8"/>
 <polygon points="875.9,679.3 986,526 978.6,689 871.3,880.7" fill="#a97767" stroke="#2a1f1a" stroke-width="1.15"/>
 <polygon points="811.3,502.8 986.1,525.9 876.3,679 659.6,642.4" fill="#b07c6a" stroke="#2a1f1a" stroke-width="1.15"/>
 <polygon points="660.3,643.1 875.9,679.3 871.3,880.7 667.4,835.6" fill="#fec4aa" stroke="#2a1f1a" stroke-width="1.15"/>
 <g fill="none" stroke="#222" stroke-width="1.6" stroke-dasharray="1.6 3.2">
  <polyline points="613,621.2 796.4,467.6 1020,494.7 899.4,668.1 613,621.2 627.5,871.5 900,940"/>
  <polyline points="899.4,668.1 898,923"/>
  <polyline points="1020,494.7 1007.8,704.4 890,930"/>
 </g>
 <path d="M748,656 L748,672 L752,668 L755,675 L757,674 L754,667 L759,667 Z" fill="#111" stroke="#fff" stroke-width="1"/>
</g>
</svg>

<div class="a" style="left:0px;top:99.8px;width:54px;height:825px;background:#f2f2f2;"></div>
<div class="a" style="left:2px;top:99.8px;width:52px;height:581px;background:#f0f0f0;"></div>
<div class="a" style="left:2px;top:680px;width:52px;height:1px;background:#d8d8d8;"></div>
<div class="a" style="left:4px;top:131px;width:48px;height:2px;background:repeating-linear-gradient(to right,#9a9a9a 0 1.5px,transparent 1.5px 4px)"></div>
<div class="a" style="left:3.3px;top:136.3px;width:24.8px;height:23.8px;background:#c5dcf2;border:1px solid #a9c8e8"></div>
<svg class="a" style="left:6.0px;top:138.5px" width="19.0" height="19.0" viewBox="0 0 20 20"><path d="M7,3 L7,17 L10,13.5 L13,19 L15,18 L12,12.5 L16.5,12.5 Z" fill="#111"/></svg>
<svg class="a" style="left:30.8px;top:138.5px" width="19.0" height="19.0" viewBox="0 0 20 20"><polygon points="3,6 10,2 17,6 17,14 10,18 3,14" fill="#bfe3f5" stroke="#3aa0d8" stroke-width="1.2"/><circle cx="10" cy="7" r="3.3" fill="#6f7f88" stroke="#333" stroke-width=".6"/><circle cx="7" cy="12.5" r="3.3" fill="#5f6f78" stroke="#333" stroke-width=".6"/><circle cx="13" cy="12.5" r="3.3" fill="#8a9aa3" stroke="#333" stroke-width=".6"/></svg>
<svg class="a" style="left:6.0px;top:163.2px" width="19.0" height="19.0" viewBox="0 0 20 20"><path d="M5,6 Q11,1 17,7 L14,17 Q9,19 6,16 Z" fill="#6a6a60" stroke="#222" stroke-width="1.2"/><path d="M2,15 Q3,7 9,8 Q5,12 5,16 Z" fill="#f0c020" stroke="#333" stroke-width=".8"/></svg>
<svg class="a" style="left:30.8px;top:163.2px" width="19.0" height="19.0" viewBox="0 0 20 20"><polygon points="2,13 12,4 18,8 8,17" fill="#f29aaa" stroke="#a05060" stroke-width="1"/><polygon points="12,4 18,8 18,10 8,18 8,17" fill="#d87080"/></svg>
<svg class="a" style="left:6.0px;top:194.5px" width="19.0" height="19.0" viewBox="0 0 20 20"><path d="M3,18 L5,13 L15,3 L17,5 L7,15 Z" fill="#a83238" stroke="#333" stroke-width=".9"/><path d="M3,18 L5,13 L7,15 Z" fill="#333"/></svg>
<svg class="a" style="left:30.8px;top:194.5px" width="19.0" height="19.0" viewBox="0 0 20 20"><path d="M4,17 Q1,12 7,11 Q11,11 9,7 Q8,3 12,4 Q15,6 13,10 Q12,13 16,12 Q19,10 17,5" fill="none" stroke="#a02030" stroke-width="1.6"/><circle cx="4" cy="17" r="1.4" fill="#d33"/><circle cx="17" cy="5" r="1.4" fill="#d33"/></svg>
<svg class="a" style="left:6.0px;top:219.4px" width="19.0" height="19.0" viewBox="0 0 20 20"><rect x="3" y="3" width="14" height="14" fill="#8b8a82" stroke="#555" stroke-width=".8"/><path d="M3,17 L17,3" stroke="#e66" stroke-width="1.2"/><circle cx="3" cy="17" r="1.3" fill="#d33"/><circle cx="17" cy="3" r="1.3" fill="#d33"/></svg>
<svg class="a" style="left:30.8px;top:219.4px" width="19.0" height="19.0" viewBox="0 0 20 20"><rect x="3" y="3" width="14" height="14" fill="#8b8a82" stroke="#d55" stroke-width="1"/><path d="M3,8 Q12,8 12,17" fill="none" stroke="#e77" stroke-width="1"/><circle cx="3" cy="3" r="1.3" fill="#d33"/><circle cx="17" cy="17" r="1.3" fill="#d33"/><circle cx="3" cy="17" r="1.3" fill="#d33"/></svg>
<svg class="a" style="left:6.0px;top:245.8px" width="19.0" height="19.0" viewBox="0 0 20 20"><circle cx="10" cy="10" r="8" fill="#8b8a82" stroke="#555" stroke-width=".8"/><path d="M10,10 L15,5" stroke="#e66" stroke-width="1.1"/><circle cx="10" cy="10" r="1.3" fill="#d33"/><circle cx="15" cy="5" r="1.2" fill="#d33"/></svg>
<svg class="a" style="left:30.8px;top:245.8px" width="19.0" height="19.0" viewBox="0 0 20 20"><polygon points="10,2 17,6 18,13 12,18 5,17 2,10 5,4" fill="#8b8a82" stroke="#e88" stroke-width="1"/><path d="M10,10 L15,5" stroke="#e66"/><circle cx="10" cy="10" r="1.3" fill="#d33"/></svg>
<svg class="a" style="left:6.0px;top:270.6px" width="19.0" height="19.0" viewBox="0 0 20 20"><path d="M3,17 Q16,15 17,3" fill="none" stroke="#444" stroke-width="1.3"/><path d="M3,3 L17,3 M3,17 L17,3" stroke="#e55" stroke-width="1.1"/><circle cx="3" cy="3" r="1.3" fill="#d33"/><circle cx="17" cy="3" r="1.3" fill="#d33"/><circle cx="3" cy="17" r="1.3" fill="#d33"/></svg>
<svg class="a" style="left:30.8px;top:270.6px" width="19.0" height="19.0" viewBox="0 0 20 20"><path d="M3,15 Q2,4 12,2 Q18,3 18,10" fill="none" stroke="#444" stroke-width="1.3"/><path d="M7,17 L3,10 L18,10 Z" fill="none" stroke="#e55" stroke-width="1.1"/><circle cx="3" cy="10" r="1.3" fill="#d33"/><circle cx="18" cy="10" r="1.3" fill="#d33"/><circle cx="7" cy="17" r="1.3" fill="#d33"/></svg>
<svg class="a" style="left:6.0px;top:295.5px" width="19.0" height="19.0" viewBox="0 0 20 20"><path d="M6,3 Q18,3 17,13 Q15,19 9,18" fill="none" stroke="#444" stroke-width="1.3"/><path d="M6,3 L2,13 L12,17" fill="none" stroke="#e66" stroke-width="1.1"/><circle cx="6" cy="3" r="1.3" fill="#d33"/><circle cx="2" cy="13" r="1.3" fill="#d33"/><circle cx="12" cy="17" r="1.3" fill="#d33"/></svg>
<svg class="a" style="left:30.8px;top:295.5px" width="19.0" height="19.0" viewBox="0 0 20 20"><path d="M3,17 L3,4 L17,4 Q17,15 3,17 Z" fill="#8b8a82" stroke="#555" stroke-width=".8"/><path d="M3,17 L17,4" stroke="#e66"/><circle cx="3" cy="4" r="1.2" fill="#d33"/><circle cx="17" cy="4" r="1.2" fill="#d33"/></svg>
<svg class="a" style="left:6.0px;top:328.5px" width="19.0" height="19.0" viewBox="0 0 20 20"><path d="M10,1 L14,5 L11.5,5 L11.5,8.5 L15,8.5 L15,6 L19,10 L15,14 L15,11.5 L11.5,11.5 L11.5,15 L14,15 L10,19 L6,15 L8.5,15 L8.5,11.5 L5,11.5 L5,14 L1,10 L5,6 L5,8.5 L8.5,8.5 L8.5,5 L6,5 Z" fill="#c02030"/></svg>
<svg class="a" style="left:30.8px;top:328.5px" width="19.0" height="19.0" viewBox="0 0 20 20"><polygon points="1,12 10,7 19,11 10,16" fill="#777" stroke="#222" stroke-width="1"/><polygon points="1,12 10,16 10,18.5 1,14.5" fill="#333"/><polygon points="10,16 19,11 19,13.5 10,18.5" fill="#555"/><path d="M10,12 L10,5" stroke="#c02030" stroke-width="3"/><polygon points="10,1 5.5,6.5 14.5,6.5" fill="#c02030"/></svg>
<svg class="a" style="left:6.0px;top:353.3px" width="19.0" height="19.0" viewBox="0 0 20 20"><path d="M4,9 A6,6 0 0 1 16,8" fill="none" stroke="#c02030" stroke-width="3"/><path d="M16,11 A6,6 0 0 1 4,12" fill="none" stroke="#c02030" stroke-width="3"/><polygon points="18,4 18,11 12,9" fill="#c02030"/><polygon points="2,16 2,9 8,11" fill="#c02030"/></svg>
<svg class="a" style="left:30.8px;top:353.3px" width="19.0" height="19.0" viewBox="0 0 20 20"><path d="M3,14 Q2,4 11,3 Q18,3 18,10 Q14,6 9,8 Q6,10 7,15 Z" fill="#3a3a3a"/><path d="M7,14 Q8,9 13,9 Q16,10 17,13 Q13,13 10,16 Z" fill="#555"/><path d="M9,5 Q13,5 14,8" stroke="#d33" stroke-width="2" fill="none"/></svg>
<svg class="a" style="left:6.0px;top:375.8px" width="19.0" height="19.0" viewBox="0 0 20 20"><rect x="2" y="5" width="14" height="13" fill="#a49e8c" stroke="#c44" stroke-width=".9"/><rect x="2" y="5" width="12" height="11" fill="#fff" opacity=".25"/><path d="M9,12 L16,5" stroke="#c02030" stroke-width="2.6"/><polygon points="19,2 11,4 17,10" fill="#c02030"/></svg>
<svg class="a" style="left:30.8px;top:375.8px" width="19.0" height="19.0" viewBox="0 0 20 20"><path d="M4,18 Q4,6 15,4" fill="none" stroke="#c02030" stroke-width="1.6"/><path d="M9,18 Q9,10 17,8" fill="none" stroke="#c02030" stroke-width="1.6"/><path d="M8,9 L13,14 M11,8 L14,12" stroke="#333" stroke-width="1.3"/></svg>
<svg class="a" style="left:6.0px;top:410.1px" width="19.0" height="19.0" viewBox="0 0 20 20"><path d="M2.5,17.5 L9,11" stroke="#222" stroke-width="2.6"/><path d="M4,16 L8,12" stroke="#c8c040" stroke-width="1"/><ellipse cx="12.5" cy="7" rx="6" ry="4.5" transform="rotate(-45 12.5 7)" fill="#c8c24a" stroke="#222" stroke-width="1.2"/><ellipse cx="12.5" cy="7" rx="3" ry="2" transform="rotate(-45 12.5 7)" fill="#e8e090"/></svg>
<svg class="a" style="left:30.8px;top:410.1px" width="19.0" height="19.0" viewBox="0 0 20 20"><path d="M3,15 L15,4 M2,12 L6,17 M13,2 L17,6" stroke="#555" stroke-width="1.2"/><path d="M6,6 L4,4" stroke="#555"/><text x="5" y="8" font-size="6" fill="#555">⁂</text></svg>
<svg class="a" style="left:6.0px;top:434.2px" width="19.0" height="19.0" viewBox="0 0 20 20"><path d="M2,16 Q2,5 12,3 Q17,2.5 18,5 L3,17 Z" fill="#c8c24a" stroke="#222" stroke-width="1.2"/><path d="M5,13 Q6,7 13,5" fill="none" stroke="#e8e4a0" stroke-width="1.5"/></svg>
<svg class="a" style="left:30.8px;top:434.2px" width="19.0" height="19.0" viewBox="0 0 20 20"><rect x="7" y="1" width="12" height="10" fill="#fff" stroke="#555" stroke-width="1"/><text x="8.5" y="9" font-size="7.5" font-family="Liberation Serif" fill="#222">A1</text><path d="M4,9 L4,18" stroke="#333" stroke-width="1.2"/><polygon points="4,19 2,15 6,15" fill="#333"/></svg>
<svg class="a" style="left:6.0px;top:459.5px" width="19.0" height="19.0" viewBox="0 0 20 20"><path d="M10,10 L10,2" stroke="#2a5ae8" stroke-width="1.5"/><path d="M10,10 L17,15" stroke="#d22" stroke-width="1.5"/><path d="M10,10 L3,15" stroke="#2a2" stroke-width="1.5"/><path d="M10,10 L4,7" stroke="#6a6" stroke-width="1.2"/><circle cx="10" cy="10" r="1.5" fill="#333"/></svg>
<svg class="a" style="left:30.8px;top:459.5px" width="19.0" height="19.0" viewBox="0 0 20 20"><path d="M3,17 L9,2 L12,2 L17,17 L13,17 L10.5,9 L7,17 Z" fill="#333"/><path d="M7,17 L10,19 L17,17" fill="#222"/></svg>
<svg class="a" style="left:6.0px;top:493.1px" width="19.0" height="19.0" viewBox="0 0 20 20"><path d="M3,7 Q10,3 17,8 L17,14 Q10,18 3,13 Z" fill="#2a8a4a"/><path d="M3,7 Q9,5 10,8 L10,16 Q5,16 3,13 Z" fill="#c02030"/><path d="M10,2 L10,18" stroke="#333" stroke-width="1.3"/></svg>
<svg class="a" style="left:30.8px;top:493.1px" width="19.0" height="19.0" viewBox="0 0 20 20"><path d="M3,12 Q2,6 5,8 L6,10 L6,4 Q8,2 9,4 L9,9 L10,3 Q12,2 12,4 L12,9 L14,4 Q16,4 15,6 L14,10 Q17,8 18,10 Q14,15 11,18 L6,18 Z" fill="#efe0b0" stroke="#a09060" stroke-width="1"/></svg>
<svg class="a" style="left:6.0px;top:516.5px" width="19.0" height="19.0" viewBox="0 0 20 20"><circle cx="12" cy="8" r="5.5" fill="#8fc3ec" stroke="#333" stroke-width="1.4"/><path d="M8,12 L2,18" stroke="#222" stroke-width="2.8"/></svg>
<svg class="a" style="left:30.8px;top:516.5px" width="19.0" height="19.0" viewBox="0 0 20 20"><rect x="2" y="2" width="16" height="16" fill="none" stroke="#d33" stroke-width="1.4"/><circle cx="12" cy="8" r="5" fill="#8fc3ec" stroke="#333" stroke-width="1.3"/><path d="M8,12 L3,17" stroke="#222" stroke-width="2.5"/></svg>
<svg class="a" style="left:6.0px;top:541.1px" width="19.0" height="19.0" viewBox="0 0 20 20"><path d="M1,1 L6,2 L2,6 Z M19,1 L18,6 L14,2 Z M1,19 L2,14 L6,18 Z M19,19 L14,18 L18,14 Z" fill="#c02030"/><path d="M3,3 L7,7 M17,3 L13,7 M3,17 L7,13 M17,17 L13,13" stroke="#c02030" stroke-width="1.6"/><circle cx="10" cy="10" r="4" fill="#8fc3ec" stroke="#333" stroke-width="1.2"/></svg>
<svg class="a" style="left:30.8px;top:541.1px" width="19.0" height="19.0" viewBox="0 0 20 20"><circle cx="8" cy="8" r="6" fill="#3a7fd0" stroke="#235" stroke-width="1.2"/><path d="M12,12 L18,18" stroke="#222" stroke-width="3"/><circle cx="10" cy="9" r="3" fill="#a9d0f0"/></svg>
<svg class="a" style="left:6.0px;top:575.3px" width="19.0" height="19.0" viewBox="0 0 20 20"><circle cx="10" cy="3.5" r="2" fill="none" stroke="#444" stroke-width="1.1"/><path d="M8,6 L12,6 L12,13 L11,18 L9,18 L8,13 Z" fill="#fff" stroke="#444" stroke-width="1.1"/><path d="M5,17 L15,17" stroke="#d33" stroke-width="1.3"/><path d="M7,14 L13,19 M13,14 L7,19" stroke="#d33" stroke-width="1"/></svg>
<svg class="a" style="left:30.8px;top:575.3px" width="19.0" height="19.0" viewBox="0 0 20 20"><path d="M1,10 Q10,2 19,10 Q10,16 1,10 Z" fill="#fff" stroke="#222" stroke-width="1.6"/><circle cx="10" cy="9.5" r="3.5" fill="#333"/><path d="M2,7 Q10,0 18,7" fill="none" stroke="#222" stroke-width="1.6"/></svg>
<svg class="a" style="left:6.0px;top:599.5px" width="19.0" height="19.0" viewBox="0 0 20 20"><ellipse cx="6" cy="6" rx="3" ry="4.5" fill="#222"/><ellipse cx="6" cy="15" rx="2.5" ry="2" fill="#222"/><ellipse cx="14" cy="9" rx="3" ry="4.5" fill="#222"/><ellipse cx="14" cy="17" rx="2.5" ry="2" fill="#222"/></svg>
<svg class="a" style="left:30.8px;top:599.5px" width="19.0" height="19.0" viewBox="0 0 20 20"><circle cx="10" cy="10" r="6" fill="none" stroke="#222" stroke-width="1.3"/><path d="M1,10 L19,10 M10,1 L10,19" stroke="#222" stroke-width="1.3"/><polygon points="19,10 15,7.5 15,12.5" fill="#111"/><polygon points="1,10 5,7.5 5,12.5" fill="#111"/></svg>
<svg class="a" style="left:6.0px;top:633.1px" width="19.0" height="19.0" viewBox="0 0 20 20"><polygon points="10,1 18,5 18,14 10,18 2,14 2,5" fill="#bcd8ee" stroke="#2b7cc4" stroke-width="1.6"/><polygon points="10,5 14,7 14,12 10,14 6,12 6,7" fill="none" stroke="#2b7cc4" stroke-width="1.2"/><path d="M15,11 L15,18 M12,15 L15,19 L18,15" stroke="#2b7cc4" stroke-width="2" fill="none"/></svg>
<svg class="a" style="left:30.8px;top:633.1px" width="19.0" height="19.0" viewBox="0 0 20 20"><path d="M1,3 Q10,12 19,3 M1,11 Q10,2 19,11" fill="none" stroke="#2b7cc4" stroke-width="2.4"/><circle cx="14.5" cy="14.5" r="4.5" fill="#fff" stroke="#2b7cc4" stroke-width="1.3"/><path d="M12.5,14.5 L16.5,14.5" stroke="#2b7cc4"/></svg>
<svg class="a" style="left:6.0px;top:656.5px" width="19.0" height="19.0" viewBox="0 0 20 20"><polygon points="2,5 9,2 16,5 9,8" fill="#bcd8ee" stroke="#2b7cc4" stroke-width="1.3"/><polygon points="2,9 9,12 16,9 16,11 9,14 2,11" fill="#2b7cc4"/><polygon points="2,13 9,16 16,13 16,15 9,18 2,15" fill="#2b7cc4"/><path d="M12,14 L18,14 L18,12 L20,15 L18,18 L18,16 L12,16 Z" fill="#2b7cc4"/></svg>
<svg class="a" style="left:30.8px;top:656.5px" width="19.0" height="19.0" viewBox="0 0 20 20"><path d="M1,3 Q10,12 19,3 M1,11 Q10,2 19,11" fill="none" stroke="#2b7cc4" stroke-width="2.4"/><circle cx="14.5" cy="14.5" r="4.2" fill="#fff" stroke="#2b7cc4" stroke-width="1.3" stroke-dasharray="1.6 1"/><circle cx="14.5" cy="14.5" r="1.6" fill="#2b7cc4"/></svg>
<div class="a" style="left:5px;top:188.6px;width:46px;height:1px;background:#a8a8a8;"></div>
<div class="a" style="left:5px;top:320.8px;width:46px;height:1px;background:#a8a8a8;"></div>
<div class="a" style="left:5px;top:402.4px;width:46px;height:1px;background:#a8a8a8;"></div>
<div class="a" style="left:5px;top:485px;width:46px;height:1px;background:#a8a8a8;"></div>
<div class="a" style="left:5px;top:567px;width:46px;height:1px;background:#a8a8a8;"></div>
<div class="a" style="left:5px;top:625px;width:46px;height:1px;background:#a8a8a8;"></div>
<div class="a" style="left:0px;top:0px;width:1.4px;height:923px;background:#0c0c0c;"></div>
<div class="a" style="left:1565px;top:98px;width:255px;height:825px;background:#efefef;"></div>
<div class="a" style="left:1819.5px;top:98px;width:1px;height:825px;background:#d8d8d8;"></div>
<div class="a" style="left:1820.5px;top:98px;width:15.5px;height:825px;background:#f4f4f4;"></div>
<div class="a" style="left:1568.5px;top:307.9px;width:251px;height:16.600000000000023px;background:linear-gradient(to bottom,#f4f4f4,#d6d6d6);border:1px solid #c4c4c4"></div>
<svg class="a" style="left:1575.5px;top:312.2px" width="9" height="8" viewBox="0 0 9 8"><polygon points="0.5,1 8.5,1 4.5,7.5" fill="#111"/></svg>
<div class="t" style="left:1589.6px;top:310.22px;font-size:11.2px;color:#1a1a1a;font-weight:normal;">Materials</div>
<div class="a" style="left:1804.2px;top:310.4px;width:13px;height:12px;background:#f4f4f4;border:1px solid #b0b0b0"></div>
<svg class="a" style="left:1807.5px;top:313.7px" width="7" height="6" viewBox="0 0 7 6"><path d="M1,0.5 L6,5.5 M6,0.5 L1,5.5" stroke="#222" stroke-width="1.1"/></svg>
<div class="a" style="left:1570.4px;top:327.3px;width:62.3px;height:67px;background:#fff;border:1px solid #c8c8c8"></div>
<svg class="a" style="left:1571.4px;top:328.3px" width="60.3" height="65" viewBox="0 0 60.3 65"><polygon points="0,1 0,62 60,62" fill="#a4b2ba"/><rect x="0" y="62" width="60.3" height="3" fill="#e8e8e8"/><line x1="0" y1="62" x2="60.3" y2="62" stroke="#c8c8c8"/></svg>
<div class="a" style="left:1636.6px;top:327.6px;width:155.8px;height:18px;background:#efefef;border:1px solid #d4d4d4;background:#f2f2f2"></div>
<div class="t" style="left:1641.7px;top:331.11px;font-size:10.5px;color:#8a8a8a;font-weight:normal;">Default</div>
<svg class="a" style="left:1798.8px;top:328.1px" width="17.0" height="17.0" viewBox="0 0 20 20"><path d="M4,2 L14,2 M4,2 L9,6 L14,2 Z" fill="#111"/><rect x="4" y="6.5" width="10" height="11" fill="#111"/><path d="M9,8.5 L9,15.5 M5.5,12 L12.5,12" stroke="#fff" stroke-width="2"/></svg>
<svg class="a" style="left:1797.5px;top:350.2px" width="18.0" height="18.0" viewBox="0 0 20 20"><polygon points="4,6 12,2 19,5 19,13 11,18 4,14" fill="#222"/><polygon points="4,6 12,2 19,5 11,9" fill="#e8e070"/><path d="M6,6 L15,4 M7,7.5 L16,5.5" stroke="#555"/><circle cx="6" cy="15" r="4.5" fill="#fff" stroke="#222" stroke-width="1.3"/><path d="M6,12 L6,18 M3,15 L9,15" stroke="#222" stroke-width="1.3"/></svg>
<svg class="a" style="left:1797.2px;top:373.2px" width="20.5" height="20.6" viewBox="0 0 20.5 20.6"><rect width="20.5" height="20.6" fill="#fff"/><polygon points="0,0 20.5,20.6 0,20.6" fill="#a4b2ba"/></svg>
<div class="a" style="left:1568.5px;top:396px;width:251px;height:1.5px;background:#c8c8c8;"></div>
<div class="a" style="left:1568.5px;top:402.3px;width:42.2px;height:20px;background:#f7f7f7;border:1px solid #e0e0e0;border-bottom:none"></div>
<div class="a" style="left:1610.7px;top:404px;width:36.6px;height:18px;background:#ececec;border:1px solid #dcdcdc;border-bottom:none"></div>
<div class="t" style="left:1574px;top:406.61px;font-size:10.5px;color:#1a1a1a;font-weight:normal;">Select</div>
<div class="t" style="left:1614.4px;top:408.11px;font-size:10.5px;color:#1a1a1a;font-weight:normal;">Edit</div>
<svg class="a" style="left:1798.3px;top:399.5px" width="18.0" height="18.0" viewBox="0 0 20 20"><path d="M2,18 L4,13 L12,5 L15,8 L7,16 Z" fill="#d8b060" stroke="#553" stroke-width="1"/><path d="M12,5 L15,2 Q18,1 18,4 L15,8 Z" fill="#222"/></svg>
<div class="a" style="left:1568.5px;top:421.5px;width:251px;height:1px;background:#dcdcdc;"></div>
<svg class="a" style="left:1576.8px;top:426.7px" width="17.0" height="17.0" viewBox="0 0 20 20"><path d="M2,10 L9,3 L9,7 L17,7 L17,13 L9,13 L9,17 Z" fill="#fff" stroke="#222" stroke-width="1.4"/></svg>
<svg class="a" style="left:1598.8px;top:426.7px" width="17.0" height="17.0" viewBox="0 0 20 20"><path d="M18,10 L11,3 L11,7 L3,7 L3,13 L11,13 L11,17 Z" fill="#fff" stroke="#999" stroke-width="1.3"/></svg>
<svg class="a" style="left:1621.9px;top:427.5px" width="17.0" height="17.0" viewBox="0 0 20 20"><path d="M1,10 L10,2 L19,10" fill="none" stroke="#111" stroke-width="1.8"/><path d="M4,9 L4,18 L16,18 L16,9" fill="#fff" stroke="#111" stroke-width="1.8"/><rect x="8" y="12" width="4" height="6" fill="#111"/></svg>
<div class="a" style="left:1643.7px;top:428.2px;width:151.5px;height:22px;background:#fff;border:1px solid #7a7a7a"></div>
<div class="t" style="left:1647.3px;top:434.81px;font-size:10.5px;color:#1a1a1a;font-weight:normal;">Colors</div>
<svg class="a" style="left:1781.5px;top:436px" width="10" height="7" viewBox="0 0 10 7"><path d="M1,1.5 L5,5.5 L9,1.5" fill="none" stroke="#555" stroke-width="1.1"/></svg>
<svg class="a" style="left:1800.8px;top:427.5px" width="17.0" height="17.0" viewBox="0 0 20 20"><rect x="2" y="4" width="9" height="12" fill="#c8d8f0" stroke="#333" stroke-width="1.1"/><path d="M2,9 L11,9" stroke="#555"/><polygon points="10,2 19,10 10,18" fill="#111"/></svg>
<div class="a" style="left:1570px;top:451px;width:235.5px;height:191px;background:#fff;"></div>
<div class="a" style="left:1805.5px;top:451px;width:14.3px;height:191px;background:#f0f0f0;"></div>
<div class="a" style="left:1805.5px;top:542.5px;width:14.3px;height:16.2px;background:#cdcdcd;"></div>
<svg class="a" style="left:1808px;top:455px" width="10" height="8" viewBox="0 0 10 8"><path d="M1.5,6 L5,2.5 L8.5,6" fill="none" stroke="#555" stroke-width="1.2"/></svg>
<svg class="a" style="left:1808px;top:630px" width="10" height="8" viewBox="0 0 10 8"><path d="M1.5,2 L5,5.5 L8.5,2" fill="none" stroke="#555" stroke-width="1.2"/></svg>
<div class="a" style="left:1570px;top:451px;width:235.5px;height:191px;overflow:hidden">
<div class="a" style="left:4.8px;top:-5.0px;width:47px;height:11.9px;background:#22ee22;border:1px solid #a8a8a8;box-shadow:inset 0 0 0 1px #fff"></div>
<div class="a" style="left:54.3px;top:-5.0px;width:47px;height:11.9px;background:#11c811;border:1px solid #a8a8a8;box-shadow:inset 0 0 0 1px #fff"></div>
<div class="a" style="left:103.9px;top:-5.0px;width:47px;height:11.9px;background:#0a9a0a;border:1px solid #a8a8a8;box-shadow:inset 0 0 0 1px #fff"></div>
<div class="a" style="left:153.5px;top:-5.0px;width:47px;height:11.9px;background:#056005;border:1px solid #a8a8a8;box-shadow:inset 0 0 0 1px #fff"></div>
<div class="a" style="left:4.8px;top:10.0px;width:47px;height:46.9px;background:#ccffff;border:1px solid #a8a8a8;box-shadow:inset 0 0 0 1px #fff"></div>
<div class="a" style="left:54.3px;top:10.0px;width:47px;height:46.9px;background:#99ffff;border:1px solid #a8a8a8;box-shadow:inset 0 0 0 1px #fff"></div>
<div class="a" style="left:103.9px;top:10.0px;width:47px;height:46.9px;background:#66ffff;border:1px solid #a8a8a8;box-shadow:inset 0 0 0 1px #fff"></div>
<div class="a" style="left:153.5px;top:10.0px;width:47px;height:46.9px;background:#33ffff;border:1px solid #a8a8a8;box-shadow:inset 0 0 0 1px #fff"></div>
<div class="a" style="left:4.8px;top:59.8px;width:47px;height:46.7px;background:#00ffff;border:1px solid #a8a8a8;box-shadow:inset 0 0 0 1px #fff"></div>
<div class="a" style="left:54.3px;top:59.8px;width:47px;height:46.7px;background:#00cccc;border:1px solid #a8a8a8;box-shadow:inset 0 0 0 1px #fff"></div>
<div class="a" style="left:103.9px;top:59.8px;width:47px;height:46.7px;background:#009999;border:1px solid #a8a8a8;box-shadow:inset 0 0 0 1px #fff"></div>
<div class="a" style="left:153.5px;top:59.8px;width:47px;height:46.7px;background:#006666;border:1px solid #a8a8a8;box-shadow:inset 0 0 0 1px #fff"></div>
<div class="a" style="left:4.8px;top:109.4px;width:47px;height:46.9px;background:#ccccff;border:1px solid #a8a8a8;box-shadow:inset 0 0 0 1px #fff"></div>
<div class="a" style="left:54.3px;top:109.4px;width:47px;height:46.9px;background:#9999ff;border:1px solid #a8a8a8;box-shadow:inset 0 0 0 1px #fff"></div>
<div class="a" style="left:103.9px;top:109.4px;width:47px;height:46.9px;background:#6666ff;border:1px solid #a8a8a8;box-shadow:inset 0 0 0 1px #fff"></div>
<div class="a" style="left:153.5px;top:109.4px;width:47px;height:46.9px;background:#3333ff;border:1px solid #a8a8a8;box-shadow:inset 0 0 0 1px #fff"></div>
<div class="a" style="left:4.8px;top:159.4px;width:47px;height:37.6px;background:#0000ff;border:1px solid #a8a8a8;box-shadow:inset 0 0 0 1px #fff"></div>
<div class="a" style="left:54.3px;top:159.4px;width:47px;height:37.6px;background:#0000cc;border:1px solid #a8a8a8;box-shadow:inset 0 0 0 1px #fff"></div>
<div class="a" style="left:103.9px;top:159.4px;width:47px;height:37.6px;background:#000099;border:1px solid #a8a8a8;box-shadow:inset 0 0 0 1px #fff"></div>
<div class="a" style="left:153.5px;top:159.4px;width:47px;height:37.6px;background:#000066;border:1px solid #a8a8a8;box-shadow:inset 0 0 0 1px #fff"></div>
</div>
<div class="a" style="left:1568.5px;top:642.3px;width:251px;height:4px;background:#e0e0e0;border-top:1px solid #c8c8c8;border-bottom:1px solid #c8c8c8"></div>
<div class="a" style="left:1568.5px;top:649.2px;width:251px;height:15.299999999999955px;background:linear-gradient(to bottom,#f4f4f4,#d6d6d6);border:1px solid #c4c4c4"></div>
<svg class="a" style="left:1575.5px;top:652.9px" width="9" height="8" viewBox="0 0 9 8"><polygon points="0.5,1 8.5,1 4.5,7.5" fill="#111"/></svg>
<div class="t" style="left:1589.7px;top:650.22px;font-size:11.2px;color:#1a1a1a;font-weight:normal;">Components</div>
<div class="a" style="left:1804.2px;top:651.7px;width:13px;height:12px;background:#f4f4f4;border:1px solid #b0b0b0"></div>
<svg class="a" style="left:1807.5px;top:655.0px" width="7" height="6" viewBox="0 0 7 6"><path d="M1,0.5 L6,5.5 M6,0.5 L1,5.5" stroke="#222" stroke-width="1.1"/></svg>
<div class="a" style="left:1570.7px;top:667.6px;width:62.3px;height:66.8px;background:#fff;border:1px solid #c0c0c0"></div>
<svg class="a" style="left:1583px;top:682px" width="38" height="38" viewBox="0 0 38 38">
<g stroke="#8a8a8a" stroke-width="1.2" stroke-linejoin="round">
<polygon points="19,2 27,6 27,15 19,19 11,15 11,6" fill="#c8c8c8"/><polygon points="11,6 19,2 27,6 19,10" fill="#e0e0e0"/>
<polygon points="11,15 19,19 19,28 11,32 3,28 3,19" fill="#c0c0c0"/><polygon points="3,19 11,15 19,19 11,23" fill="#dcdcdc"/>
<polygon points="27,15 35,19 35,28 27,32 19,28 19,19" fill="#b8b8b8"/><polygon points="19,19 27,15 35,19 27,23" fill="#d8d8d8"/>
</g></svg>
<div class="a" style="left:1636.7px;top:667.6px;width:155.7px;height:17.8px;background:#f0f0f0;border:1px solid #d4d4d4"></div>
<div class="a" style="left:1636.7px;top:687.5px;width:155.7px;height:46.9px;background:#f0f0f0;border:1px solid #d4d4d4"></div>
<svg class="a" style="left:1798.4px;top:668.3px" width="17.0" height="17.0" viewBox="0 0 20 20"><path d="M4,2 L14,2 M4,2 L9,6 L14,2 Z" fill="#111"/><rect x="4" y="6.5" width="10" height="11" fill="#111"/><path d="M9,8.5 L9,15.5 M5.5,12 L12.5,12" stroke="#fff" stroke-width="2"/></svg>
<div class="a" style="left:1568.5px;top:737px;width:251px;height:1.5px;background:#c8c8c8;"></div>
<div class="a" style="left:1569px;top:742.7px;width:41.6px;height:20px;background:#f7f7f7;border:1px solid #e0e0e0;border-bottom:none"></div>
<div class="a" style="left:1610.6px;top:744px;width:38px;height:18.7px;background:#ececec;border:1px solid #dcdcdc;border-bottom:none"></div>
<div class="a" style="left:1650.5px;top:744px;width:49px;height:18.7px;background:#ececec;border:1px solid #dcdcdc;border-bottom:none"></div>
<div class="t" style="left:1574.4px;top:747.61px;font-size:10.5px;color:#1a1a1a;font-weight:normal;">Select</div>
<div class="t" style="left:1614.6px;top:749.11px;font-size:10.5px;color:#1a1a1a;font-weight:normal;">Edit</div>
<div class="t" style="left:1654.4px;top:749.11px;font-size:10.5px;color:#1a1a1a;font-weight:normal;">Statistics</div>
<div class="a" style="left:1568.5px;top:763px;width:251px;height:26px;background:#f0f0f0;"></div>
<div class="a" style="left:1573.8px;top:765.5px;width:29.2px;height:20.5px;background:#ececec;border:1px solid #d8d8d8"></div>
<svg class="a" style="left:1580.5px;top:768.5px" width="15.0" height="15.0" viewBox="0 0 20 20"><rect x="2" y="4" width="4" height="4" fill="none" stroke="#444" stroke-width="1.2"/><rect x="2" y="11" width="4" height="4" fill="none" stroke="#444" stroke-width="1.2"/><path d="M8,5 L12,5 M8,7 L12,7 M8,12 L12,12 M8,14 L12,14" stroke="#444" stroke-width="1"/><polygon points="13,13 17,13 15,15" fill="#444"/></svg>
<div class="a" style="left:1606px;top:765.5px;width:17.4px;height:20.5px;background:#ececec;border:1px solid #d8d8d8"></div>
<div class="a" style="left:1623.4px;top:765.5px;width:12.5px;height:20.5px;background:#ececec;border:1px solid #d8d8d8"></div>
<svg class="a" style="left:1608.0px;top:768.5px" width="16.0" height="16.0" viewBox="0 0 20 20"><path d="M1,10 L10,2 L19,10" fill="none" stroke="#111" stroke-width="1.8"/><path d="M4,9 L4,18 L16,18 L16,9" fill="#fff" stroke="#111" stroke-width="1.8"/><rect x="8" y="12" width="4" height="6" fill="#111"/></svg>
<svg class="a" style="left:1625px;top:771px" width="9" height="7" viewBox="0 0 9 7"><polygon points="0.5,0.5 8.5,0.5 4.5,6" fill="#111"/></svg>
<div class="a" style="left:1643.4px;top:766.3px;width:138px;height:18.4px;background:#fff;border:1px solid #c0c0c0"></div>
<div class="t" style="left:1646.5px;top:770.91px;font-size:10.5px;color:#8a8a8a;font-weight:normal;">3D Warehouse</div>
<div class="a" style="left:1780.5px;top:766.3px;width:17px;height:18.4px;background:#fff;border:1px solid #c0c0c0"></div>
<svg class="a" style="left:1782.5px;top:768.5px" width="14.0" height="14.0" viewBox="0 0 20 20"><circle cx="11" cy="8" r="4" fill="none" stroke="#222" stroke-width="1.4"/><path d="M8,11 L4,16" stroke="#222" stroke-width="1.6"/></svg>
<svg class="a" style="left:1803.0px;top:768.0px" width="15.0" height="15.0" viewBox="0 0 20 20"><rect x="2" y="4" width="9" height="12" fill="#c8d8f0" stroke="#333" stroke-width="1.1"/><path d="M2,9 L11,9" stroke="#555"/><polygon points="10,2 19,10 10,18" fill="#111"/></svg>
<div class="a" style="left:1568.5px;top:788.4px;width:251px;height:1.5px;background:#c8c8c8;"></div>
<div class="a" style="left:1570px;top:790px;width:249.5px;height:133px;background:#fff;"></div>
<div class="a" style="left:1575.3px;top:800px;width:60.5px;height:60.3px;background:#fff;border:1px solid #c0c0c0"></div>
<svg class="a" style="left:1577px;top:802px" width="58" height="58" viewBox="0 0 58 58"><polygon points="3,3 54,2 50,58 6,52" fill="#fff" stroke="#9a9a9a" stroke-width=".8"/></svg>
<div class="t" style="left:1640px;top:803.09px;font-size:11px;color:#111;font-weight:bold;">Component#1</div>
<div class="t" style="left:1640px;top:816.51px;font-size:10.5px;color:#222;font-weight:normal;">by</div>
<div class="t" style="left:1653.6px;top:816.60px;font-size:10.4px;color:#999;font-weight:normal;font-style:italic">Unknown</div>
<div class="t" style="left:1641px;top:830.13px;font-size:10px;color:#999;font-weight:normal;font-style:italic">No Description</div>
<div class="a" style="left:1575.3px;top:870.3px;width:60.5px;height:60.3px;background:#fff;border:1px solid #c0c0c0"></div>
<svg class="a" style="left:1577px;top:872.3px" width="58" height="58" viewBox="0 0 58 58"><polygon points="3,3 54,2 50,58 6,52" fill="#e3fbfb" stroke="#9a9a9a" stroke-width=".8"/></svg>
<div class="t" style="left:1640px;top:873.39px;font-size:11px;color:#111;font-weight:bold;">Component#2</div>
<div class="t" style="left:1640px;top:886.81px;font-size:10.5px;color:#222;font-weight:normal;">by</div>
<div class="t" style="left:1653.6px;top:886.90px;font-size:10.4px;color:#999;font-weight:normal;font-style:italic">Unknown</div>
<div class="t" style="left:1641px;top:900.44px;font-size:10px;color:#999;font-weight:normal;font-style:italic">No Description</div>
<svg class="a" style="left:1469px;top:0px;overflow:hidden" width="367" height="206" viewBox="0 0 367 206">
<defs>
 <radialGradient id="gk1"><stop offset="0" stop-color="#1e1e16" stop-opacity="1"/><stop offset=".55" stop-color="#25251b" stop-opacity=".75"/><stop offset="1" stop-color="#2c2c20" stop-opacity="0"/></radialGradient>
 <radialGradient id="gk2"><stop offset="0" stop-color="#2a2c20" stop-opacity=".85"/><stop offset="1" stop-color="#2a2c20" stop-opacity="0"/></radialGradient>
 <radialGradient id="gtr"><stop offset="0" stop-color="#808b86"/><stop offset=".35" stop-color="#737d75" stop-opacity=".9"/><stop offset=".7" stop-color="#5a6052" stop-opacity=".55"/><stop offset="1" stop-color="#454839" stop-opacity="0"/></radialGradient>
 <radialGradient id="ghalo"><stop offset="0" stop-color="#b89c74"/><stop offset=".45" stop-color="#8a7a58" stop-opacity=".85"/><stop offset="1" stop-color="#4a4736" stop-opacity="0"/></radialGradient>
 <radialGradient id="gcore"><stop offset="0" stop-color="#dcbe8f"/><stop offset=".3" stop-color="#d4b587" stop-opacity=".9"/><stop offset=".6" stop-color="#b89c70" stop-opacity=".5"/><stop offset="1" stop-color="#b89c70" stop-opacity="0"/></radialGradient>
 <radialGradient id="gstreak"><stop offset="0" stop-color="#857658" stop-opacity=".8"/><stop offset="1" stop-color="#857658" stop-opacity="0"/></radialGradient>
 <radialGradient id="gtop"><stop offset="0" stop-color="#303126" stop-opacity=".7"/><stop offset="1" stop-color="#303126" stop-opacity="0"/></radialGradient>
 <filter id="bl05"><feGaussianBlur stdDeviation="0.6"/></filter>
 <filter id="bl1" x="-20%" y="-20%" width="140%" height="140%"><feGaussianBlur stdDeviation="1.2"/></filter>
 <radialGradient id="wface" cx="183" cy="96" r="30" gradientUnits="userSpaceOnUse">
  <stop offset="0" stop-color="#e8bcb2"/><stop offset="0.65" stop-color="#d9aaa2"/><stop offset="1" stop-color="#b98a84"/>
 </radialGradient>
 <linearGradient id="wshirt" x1="0" y1="0" x2="1" y2="0">
  <stop offset="0" stop-color="#e44c50"/><stop offset="1" stop-color="#cf3a40"/>
 </linearGradient>
 <linearGradient id="warm" x1="0" y1="0" x2="0" y2="1">
  <stop offset="0" stop-color="#deaea0"/><stop offset="1" stop-color="#c08880"/>
 </linearGradient>
</defs>
<rect width="367" height="206" fill="#3c3d2f"/>
<ellipse cx="180" cy="0" rx="120" ry="14" fill="url(#gtop)"/>
<ellipse cx="8" cy="180" rx="95" ry="85" fill="url(#gk1)"/>
<ellipse cx="380" cy="165" rx="55" ry="120" fill="url(#gk2)"/>
<ellipse cx="320" cy="18" rx="135" ry="82" transform="rotate(25 320 18)" fill="url(#gtr)"/>
<ellipse cx="68" cy="50" rx="100" ry="60" fill="url(#ghalo)"/>
<ellipse cx="64" cy="47" rx="58" ry="30" fill="url(#gcore)"/>
<ellipse cx="70" cy="80" rx="42" ry="4" fill="url(#gstreak)"/>
<path d="M0,0 L22,0 Q16,4 4,4 Z" fill="#1e1e1a" opacity=".6"/>
<!-- outlet + cable -->
<rect x="23.5" y="78.5" width="6" height="8.5" fill="#d2cbb6" filter="url(#bl05)"/>
<path d="M25,87 Q21,115 23,146 M28.5,87 Q31,115 30.5,144" stroke="#15150f" stroke-width="1" fill="none"/>
<!-- desk stuff -->
<g filter="url(#bl05)">
<polygon points="18.7,146.4 41.6,150.5 45.7,176.5 21.8,174.5" fill="#3a3a35"/>
<polygon points="43.7,156.8 64.4,158 64.4,182.8 45,183" fill="#26261f"/>
<polygon points="11.4,163 18,161.5 20.8,186 14,186.5" fill="#aeac9f"/>
<path d="M0,182.8 L20,186 L49.9,185.9 L71.7,176.5 L90.4,179 L107,178.6 L60,190 L10,197 L0,200 Z" fill="#c7c2ad"/>
</g>
<!-- chair -->
<path d="M146,125 Q148,117 162,117.5 L214,120 Q224,121 226,132 L228,160 L146,160 Z" fill="#1d1e1a" filter="url(#bl05)"/>
<!-- arm -->
<g filter="url(#bl05)">
<path d="M0,200.4 L10.4,195.2 Q20,191 31.2,190 L58.2,187 Q85,182 107,178.6 L119.5,194.2 Q95,197 72.8,199.4 L52,203.6 L46.8,206 L0,206 Z" fill="url(#warm)"/>
<path d="M0,206 L0,202 Q12,197 26,198.5 L31,206 Z" fill="#16161a"/>
</g>
<!-- neck -->
<path d="M163,110 L206,110 L212,126 L170,149 L157,128 Z" fill="#c9988e" filter="url(#bl05)"/>
<!-- shirt -->
<g filter="url(#bl05)">
<path d="M107,179 Q116,153 132,139 Q144,131 157,128 L170,149 L212,126 Q224,131 232,142 Q241,170 246,206 L127,206 L125,196 Q114,192 107,179 Z" fill="url(#wshirt)"/>
<path d="M107,179 Q114,192 125,196 L131,178 Q122,170 113,164 Z" fill="#d8424a"/>
<path d="M150,150 Q160,175 156,206" stroke="#c0323a" stroke-width="1.2" fill="none" opacity=".35"/>
<path d="M157,128 L170,149 L212,126 L214,129 L171,153 L155,130 Z" fill="#e85a5e" opacity=".8"/>
</g>
<rect x="166.5" y="147.5" width="6.5" height="9" fill="#151515"/>
<!-- head -->
<g filter="url(#bl05)">
<path d="M167,79 Q175,71 190,71 Q204,74 207,92 L206,108 Q203,118 196,121 Q188,125 181,124.5 Q170,121 164,112 Q159,104 160.5,96 Q162,86 167,79 Z" fill="url(#wface)"/>
<path d="M203,101 Q209,97 212,101 Q213,110 207,116 L202,116 Z" fill="#c9968e"/>
<path d="M166,80 Q170,67 182,63 Q192,60.5 199,63 Q209,67 213,76 Q216,86 213.5,99 L207.5,99 Q206,88 201,78 Q195,71 186,70.5 Q175,71.5 166,80 Z" fill="#1c1b19"/>
<path d="M166.5,86 Q170.5,84.6 174.6,86.2 M182.4,88.2 Q188.5,87 194.6,89.5" stroke="#4a3a30" stroke-width="1.3" fill="none"/>
<path d="M167.7,90.5 Q170.5,89.3 173.8,90.8 M183.3,93 Q188,91.8 192.8,93.6" stroke="#3a2e28" stroke-width="1.1" fill="none"/>
<path d="M160.5,87.5 Q167,86 175,88 L175,93 Q168,95 161,94 Z M180.7,90 Q189,89 197.2,91.5 L196.5,97.5 Q188,99 181,96.5 Z" fill="none" stroke="#6a5a4c" stroke-width=".7" opacity=".75"/>
<path d="M175,89.5 L180.7,91 M197.2,93.2 L208.4,99.2" stroke="#6a5a4c" stroke-width=".7" opacity=".75"/>
<path d="M172,102.5 Q176,104.5 180.7,102.5" stroke="#a67c68" stroke-width="1.1" fill="none"/>
<path d="M166.8,110 Q173,107.8 180.7,110.6 Q174,114 166.8,110 Z" fill="#b07868"/>
</g>
<!-- logo -->
<rect x="174.5" y="171.5" width="5.5" height="7.5" fill="#f0f0f0"/>
<path d="M180.5,174.5 L196,176.5 L195.5,181 L180.5,179 Z" fill="#f2dcd8" opacity=".9"/>
<!-- window controls -->
<rect x="290" y="15" width="10" height="1.2" fill="#fff"/>
<rect x="336" y="13" width="7.5" height="8" fill="none" stroke="#fff" stroke-width="1.1" rx="1"/>
<path d="M338.5,11 L345,11 Q346,11 346,12 L346,18.5" fill="none" stroke="#fff" stroke-width="1.1"/>
</svg>

</body></html>
